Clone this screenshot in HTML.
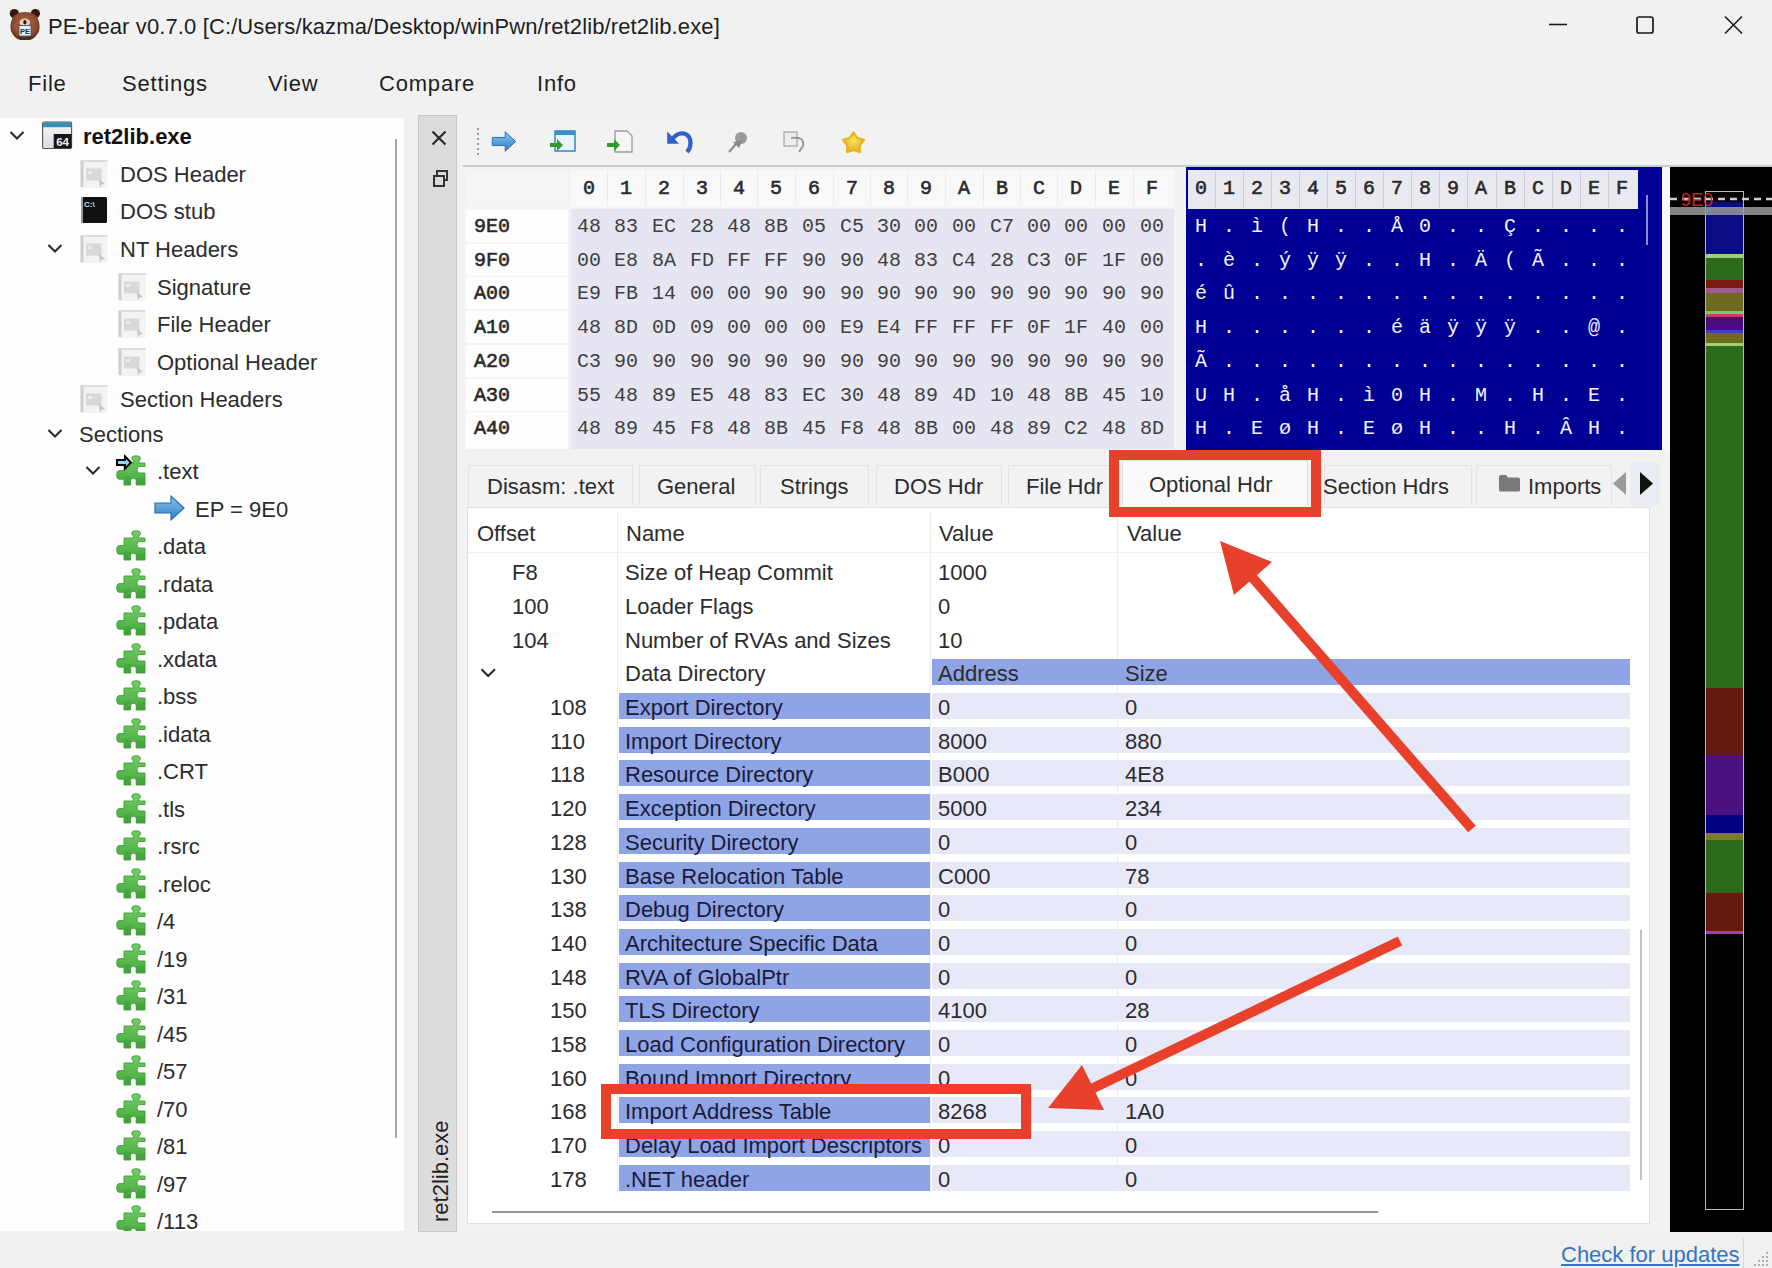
<!DOCTYPE html><html><head><meta charset="utf-8"><style>
html,body{margin:0;padding:0}
body{width:1772px;height:1268px;position:relative;overflow:hidden;background:#f0f0f0;font-family:'Liberation Sans',sans-serif}
.a{position:absolute}
svg{position:absolute;overflow:visible}
</style></head><body>
<div class="a" style="left:0px;top:0px;width:1772px;height:118px;background:#f1f1f1;"></div>
<svg style="left:5px;top:5px" width="40" height="40" viewBox="0 0 40 40">
<defs><radialGradient id="bh" cx="0.5" cy="0.45" r="0.6"><stop offset="0" stop-color="#b06a48"/><stop offset="0.7" stop-color="#8c4a30"/><stop offset="1" stop-color="#4a2418"/></radialGradient></defs>
<circle cx="9.3" cy="8.6" r="4.6" fill="#2e1810"/><circle cx="30.4" cy="8.6" r="4.6" fill="#2e1810"/>
<path d="M7 14 Q9 7 20 7 Q31 7 33 14 Q35.5 20 34 26 Q31 33 25 35 L15 35 Q9 33 6 26 Q4.5 20 7 14Z" fill="url(#bh)"/>
<ellipse cx="19.8" cy="17.5" rx="5.2" ry="4" fill="#e6d2c4"/>
<ellipse cx="19.9" cy="17.3" rx="1.6" ry="2.2" fill="#2a1a14"/>
<rect x="14" y="20.5" width="12" height="10.5" fill="#e9eef1" stroke="#3c4a5a" stroke-width="0.8"/>
<text x="20" y="29" font-size="7.5" font-family="Liberation Sans" font-weight="bold" fill="#203040" text-anchor="middle">PE</text>
<path d="M14 32 Q20 35.5 26 32" fill="none" stroke="#3a2a24" stroke-width="2"/>
</svg>
<div class="a" style="left:48px;top:16px;font:22px/22px 'Liberation Sans', sans-serif;color:#1e1e1e;white-space:pre;letter-spacing:0.12px">PE-bear v0.7.0 [C:/Users/kazma/Desktop/winPwn/ret2lib/ret2lib.exe]</div>
<svg style="left:1548px;top:16px" width="20" height="18"><line x1="1" y1="8.5" x2="19" y2="8.5" stroke="#1a1a1a" stroke-width="1.6"/></svg>
<svg style="left:1636px;top:16px" width="18" height="18"><rect x="1" y="1" width="16" height="16" rx="2" fill="none" stroke="#1a1a1a" stroke-width="1.7"/></svg>
<svg style="left:1724px;top:16px" width="19" height="18"><path d="M1 0.5 L18 17.5 M18 0.5 L1 17.5" stroke="#1a1a1a" stroke-width="1.6"/></svg>
<div class="a" style="left:28px;top:73px;font:22px/22px 'Liberation Sans', sans-serif;color:#1e1e1e;white-space:pre;letter-spacing:0.8px">File</div>
<div class="a" style="left:122px;top:73px;font:22px/22px 'Liberation Sans', sans-serif;color:#1e1e1e;white-space:pre;letter-spacing:0.8px">Settings</div>
<div class="a" style="left:268px;top:73px;font:22px/22px 'Liberation Sans', sans-serif;color:#1e1e1e;white-space:pre;letter-spacing:0.8px">View</div>
<div class="a" style="left:379px;top:73px;font:22px/22px 'Liberation Sans', sans-serif;color:#1e1e1e;white-space:pre;letter-spacing:0.8px">Compare</div>
<div class="a" style="left:537px;top:73px;font:22px/22px 'Liberation Sans', sans-serif;color:#1e1e1e;white-space:pre;letter-spacing:0.8px">Info</div>
<div class="a" style="left:0px;top:118px;width:404px;height:1113px;background:#fefefe;"></div>
<div class="a" style="left:395px;top:139px;width:2px;height:999px;background:#a8a8a8;"></div>
<svg style="left:9px;top:130px" width="16" height="11"><path d="M1.5 2 L8 8.6 L14.5 2" fill="none" stroke="#2a2a2a" stroke-width="2.1"/></svg>
<svg style="left:42px;top:121px" width="31" height="28" viewBox="0 0 31 28">
<defs><linearGradient id="eg" x1="0" y1="0" x2="0" y2="1"><stop offset="0" stop-color="#f4f6f8"/><stop offset="1" stop-color="#dcdcdc"/></linearGradient></defs>
<rect x="0.6" y="1" width="29" height="26.5" rx="1.5" fill="url(#eg)" stroke="#555" stroke-width="1.1"/>
<rect x="1" y="1.2" width="28.4" height="5" fill="#3a8db4"/>
<rect x="11.7" y="13" width="17.8" height="14.3" fill="#161616"/>
<text x="20.6" y="25" font-size="11.5" font-family="Liberation Sans" font-weight="bold" fill="#f0f0f0" text-anchor="middle">64</text></svg>
<div class="a" style="left:83px;top:126px;font:22px/22px 'Liberation Sans', sans-serif;color:#111;white-space:pre;font-weight:bold">ret2lib.exe</div>
<svg style="left:80px;top:159px" width="28" height="28" viewBox="0 0 28 28">
<rect x="0.5" y="1" width="27" height="28" fill="#f3f3f3"/>
<rect x="0.5" y="1" width="27" height="2" fill="#dcdcdc"/>
<rect x="0.5" y="2" width="3" height="26" fill="#cfcfcf"/>
<rect x="6" y="9.5" width="15.5" height="12" fill="#d8d8d6"/>
<rect x="8" y="12" width="4" height="3" fill="#ececec"/>
<path d="M19 20 L25 25 L21.5 25.5 L20 29Z" fill="#c4c4c4"/></svg>
<div class="a" style="left:120px;top:164px;font:22px/22px 'Liberation Sans', sans-serif;color:#2c2c2c;white-space:pre;">DOS Header</div>
<svg style="left:80px;top:196px" width="28" height="28" viewBox="0 0 28 28">
<rect x="2" y="1" width="25" height="26" rx="1.5" fill="#111"/>
<rect x="1" y="1" width="2" height="26" fill="#999"/>
<text x="4" y="11" font-size="8" font-family="Liberation Sans" font-weight="bold" fill="#ddd">C:\</text></svg>
<div class="a" style="left:120px;top:201px;font:22px/22px 'Liberation Sans', sans-serif;color:#2c2c2c;white-space:pre;">DOS stub</div>
<svg style="left:47px;top:243px" width="16" height="11"><path d="M1.5 2 L8 8.6 L14.5 2" fill="none" stroke="#2a2a2a" stroke-width="2.1"/></svg>
<svg style="left:80px;top:234px" width="28" height="28" viewBox="0 0 28 28">
<rect x="0.5" y="1" width="27" height="28" fill="#f3f3f3"/>
<rect x="0.5" y="1" width="27" height="2" fill="#dcdcdc"/>
<rect x="0.5" y="2" width="3" height="26" fill="#cfcfcf"/>
<rect x="6" y="9.5" width="15.5" height="12" fill="#d8d8d6"/>
<rect x="8" y="12" width="4" height="3" fill="#ececec"/>
<path d="M19 20 L25 25 L21.5 25.5 L20 29Z" fill="#c4c4c4"/></svg>
<div class="a" style="left:120px;top:239px;font:22px/22px 'Liberation Sans', sans-serif;color:#2c2c2c;white-space:pre;">NT Headers</div>
<svg style="left:118px;top:272px" width="28" height="28" viewBox="0 0 28 28">
<rect x="0.5" y="1" width="27" height="28" fill="#f3f3f3"/>
<rect x="0.5" y="1" width="27" height="2" fill="#dcdcdc"/>
<rect x="0.5" y="2" width="3" height="26" fill="#cfcfcf"/>
<rect x="6" y="9.5" width="15.5" height="12" fill="#d8d8d6"/>
<rect x="8" y="12" width="4" height="3" fill="#ececec"/>
<path d="M19 20 L25 25 L21.5 25.5 L20 29Z" fill="#c4c4c4"/></svg>
<div class="a" style="left:157px;top:277px;font:22px/22px 'Liberation Sans', sans-serif;color:#2c2c2c;white-space:pre;">Signature</div>
<svg style="left:118px;top:309px" width="28" height="28" viewBox="0 0 28 28">
<rect x="0.5" y="1" width="27" height="28" fill="#f3f3f3"/>
<rect x="0.5" y="1" width="27" height="2" fill="#dcdcdc"/>
<rect x="0.5" y="2" width="3" height="26" fill="#cfcfcf"/>
<rect x="6" y="9.5" width="15.5" height="12" fill="#d8d8d6"/>
<rect x="8" y="12" width="4" height="3" fill="#ececec"/>
<path d="M19 20 L25 25 L21.5 25.5 L20 29Z" fill="#c4c4c4"/></svg>
<div class="a" style="left:157px;top:314px;font:22px/22px 'Liberation Sans', sans-serif;color:#2c2c2c;white-space:pre;">File Header</div>
<svg style="left:118px;top:347px" width="28" height="28" viewBox="0 0 28 28">
<rect x="0.5" y="1" width="27" height="28" fill="#f3f3f3"/>
<rect x="0.5" y="1" width="27" height="2" fill="#dcdcdc"/>
<rect x="0.5" y="2" width="3" height="26" fill="#cfcfcf"/>
<rect x="6" y="9.5" width="15.5" height="12" fill="#d8d8d6"/>
<rect x="8" y="12" width="4" height="3" fill="#ececec"/>
<path d="M19 20 L25 25 L21.5 25.5 L20 29Z" fill="#c4c4c4"/></svg>
<div class="a" style="left:157px;top:352px;font:22px/22px 'Liberation Sans', sans-serif;color:#2c2c2c;white-space:pre;">Optional Header</div>
<svg style="left:80px;top:384px" width="28" height="28" viewBox="0 0 28 28">
<rect x="0.5" y="1" width="27" height="28" fill="#f3f3f3"/>
<rect x="0.5" y="1" width="27" height="2" fill="#dcdcdc"/>
<rect x="0.5" y="2" width="3" height="26" fill="#cfcfcf"/>
<rect x="6" y="9.5" width="15.5" height="12" fill="#d8d8d6"/>
<rect x="8" y="12" width="4" height="3" fill="#ececec"/>
<path d="M19 20 L25 25 L21.5 25.5 L20 29Z" fill="#c4c4c4"/></svg>
<div class="a" style="left:120px;top:389px;font:22px/22px 'Liberation Sans', sans-serif;color:#2c2c2c;white-space:pre;">Section Headers</div>
<svg style="left:47px;top:428px" width="16" height="11"><path d="M1.5 2 L8 8.6 L14.5 2" fill="none" stroke="#2a2a2a" stroke-width="2.1"/></svg>
<div class="a" style="left:79px;top:424px;font:22px/22px 'Liberation Sans', sans-serif;color:#2c2c2c;white-space:pre;">Sections</div>
<svg style="left:85px;top:465px" width="16" height="11"><path d="M1.5 2 L8 8.6 L14.5 2" fill="none" stroke="#2a2a2a" stroke-width="2.1"/></svg>
<svg style="left:116px;top:455px" width="30" height="31" viewBox="0 0 30 31">
<defs><linearGradient id="pg" x1="0" y1="0" x2="0" y2="1"><stop offset="0" stop-color="#72cf66"/><stop offset="1" stop-color="#45a83c"/></linearGradient></defs>
<path d="M8 8 L17.5 8 L17.5 5.8 Q15.8 5.5 15.8 3.2 Q15.8 0.8 20.1 0.8 Q24.4 0.8 24.4 3.2 Q24.4 5.5 22.8 5.8 L22.8 8 L29 8 L29 11.5 L23.5 11.5 Q21 11.5 21 14.8 Q21 18 23.5 18 L29 18 L29 30 L20.2 30 L20.2 25.5 Q20.2 23.2 17.4 23.2 Q14.6 23.2 14.6 25.5 L14.6 30 L8 30 L8 24.2 L3.2 24.2 Q0.8 24.2 0.8 20 Q0.8 15.6 3.2 15.6 L8 15.6 Z" fill="url(#pg)" stroke="#3f9a37" stroke-width="0.9"/>
<path d="M8 21 L14.6 21 L14.6 30 L8 30Z M20.2 23 L29 23 L29 30 L20.2 30Z" fill="#3d9435" opacity=".35"/><path d="M1 5 L9 5 L9 1.5 L15 7.5 L9 13.5 L9 10 L1 10 Z" fill="#9ad4f4" stroke="#050505" stroke-width="2"/></svg>
<div class="a" style="left:157px;top:461px;font:22px/22px 'Liberation Sans', sans-serif;color:#2c2c2c;white-space:pre;">.text</div>
<svg style="left:154px;top:495px" width="31" height="26" viewBox="0 0 31 26">
<defs><linearGradient id="ba" x1="0" y1="0" x2="0" y2="1"><stop offset="0" stop-color="#8cc4ee"/><stop offset="1" stop-color="#2f7fc4"/></linearGradient></defs>
<path d="M1 8 L17 8 L17 1 L30 13 L17 25 L17 18 L1 18 Z" fill="url(#ba)" stroke="#2a6cae" stroke-width="1.2"/></svg>
<div class="a" style="left:195px;top:499px;font:22px/22px 'Liberation Sans', sans-serif;color:#2c2c2c;white-space:pre;">EP = 9E0</div>
<svg style="left:116px;top:530px" width="30" height="31" viewBox="0 0 30 31">
<defs><linearGradient id="pg" x1="0" y1="0" x2="0" y2="1"><stop offset="0" stop-color="#72cf66"/><stop offset="1" stop-color="#45a83c"/></linearGradient></defs>
<path d="M8 8 L17.5 8 L17.5 5.8 Q15.8 5.5 15.8 3.2 Q15.8 0.8 20.1 0.8 Q24.4 0.8 24.4 3.2 Q24.4 5.5 22.8 5.8 L22.8 8 L29 8 L29 11.5 L23.5 11.5 Q21 11.5 21 14.8 Q21 18 23.5 18 L29 18 L29 30 L20.2 30 L20.2 25.5 Q20.2 23.2 17.4 23.2 Q14.6 23.2 14.6 25.5 L14.6 30 L8 30 L8 24.2 L3.2 24.2 Q0.8 24.2 0.8 20 Q0.8 15.6 3.2 15.6 L8 15.6 Z" fill="url(#pg)" stroke="#3f9a37" stroke-width="0.9"/>
<path d="M8 21 L14.6 21 L14.6 30 L8 30Z M20.2 23 L29 23 L29 30 L20.2 30Z" fill="#3d9435" opacity=".35"/></svg>
<div class="a" style="left:157px;top:536px;font:22px/22px 'Liberation Sans', sans-serif;color:#2c2c2c;white-space:pre;">.data</div>
<svg style="left:116px;top:568px" width="30" height="31" viewBox="0 0 30 31">
<defs><linearGradient id="pg" x1="0" y1="0" x2="0" y2="1"><stop offset="0" stop-color="#72cf66"/><stop offset="1" stop-color="#45a83c"/></linearGradient></defs>
<path d="M8 8 L17.5 8 L17.5 5.8 Q15.8 5.5 15.8 3.2 Q15.8 0.8 20.1 0.8 Q24.4 0.8 24.4 3.2 Q24.4 5.5 22.8 5.8 L22.8 8 L29 8 L29 11.5 L23.5 11.5 Q21 11.5 21 14.8 Q21 18 23.5 18 L29 18 L29 30 L20.2 30 L20.2 25.5 Q20.2 23.2 17.4 23.2 Q14.6 23.2 14.6 25.5 L14.6 30 L8 30 L8 24.2 L3.2 24.2 Q0.8 24.2 0.8 20 Q0.8 15.6 3.2 15.6 L8 15.6 Z" fill="url(#pg)" stroke="#3f9a37" stroke-width="0.9"/>
<path d="M8 21 L14.6 21 L14.6 30 L8 30Z M20.2 23 L29 23 L29 30 L20.2 30Z" fill="#3d9435" opacity=".35"/></svg>
<div class="a" style="left:157px;top:574px;font:22px/22px 'Liberation Sans', sans-serif;color:#2c2c2c;white-space:pre;">.rdata</div>
<svg style="left:116px;top:605px" width="30" height="31" viewBox="0 0 30 31">
<defs><linearGradient id="pg" x1="0" y1="0" x2="0" y2="1"><stop offset="0" stop-color="#72cf66"/><stop offset="1" stop-color="#45a83c"/></linearGradient></defs>
<path d="M8 8 L17.5 8 L17.5 5.8 Q15.8 5.5 15.8 3.2 Q15.8 0.8 20.1 0.8 Q24.4 0.8 24.4 3.2 Q24.4 5.5 22.8 5.8 L22.8 8 L29 8 L29 11.5 L23.5 11.5 Q21 11.5 21 14.8 Q21 18 23.5 18 L29 18 L29 30 L20.2 30 L20.2 25.5 Q20.2 23.2 17.4 23.2 Q14.6 23.2 14.6 25.5 L14.6 30 L8 30 L8 24.2 L3.2 24.2 Q0.8 24.2 0.8 20 Q0.8 15.6 3.2 15.6 L8 15.6 Z" fill="url(#pg)" stroke="#3f9a37" stroke-width="0.9"/>
<path d="M8 21 L14.6 21 L14.6 30 L8 30Z M20.2 23 L29 23 L29 30 L20.2 30Z" fill="#3d9435" opacity=".35"/></svg>
<div class="a" style="left:157px;top:611px;font:22px/22px 'Liberation Sans', sans-serif;color:#2c2c2c;white-space:pre;">.pdata</div>
<svg style="left:116px;top:643px" width="30" height="31" viewBox="0 0 30 31">
<defs><linearGradient id="pg" x1="0" y1="0" x2="0" y2="1"><stop offset="0" stop-color="#72cf66"/><stop offset="1" stop-color="#45a83c"/></linearGradient></defs>
<path d="M8 8 L17.5 8 L17.5 5.8 Q15.8 5.5 15.8 3.2 Q15.8 0.8 20.1 0.8 Q24.4 0.8 24.4 3.2 Q24.4 5.5 22.8 5.8 L22.8 8 L29 8 L29 11.5 L23.5 11.5 Q21 11.5 21 14.8 Q21 18 23.5 18 L29 18 L29 30 L20.2 30 L20.2 25.5 Q20.2 23.2 17.4 23.2 Q14.6 23.2 14.6 25.5 L14.6 30 L8 30 L8 24.2 L3.2 24.2 Q0.8 24.2 0.8 20 Q0.8 15.6 3.2 15.6 L8 15.6 Z" fill="url(#pg)" stroke="#3f9a37" stroke-width="0.9"/>
<path d="M8 21 L14.6 21 L14.6 30 L8 30Z M20.2 23 L29 23 L29 30 L20.2 30Z" fill="#3d9435" opacity=".35"/></svg>
<div class="a" style="left:157px;top:649px;font:22px/22px 'Liberation Sans', sans-serif;color:#2c2c2c;white-space:pre;">.xdata</div>
<svg style="left:116px;top:680px" width="30" height="31" viewBox="0 0 30 31">
<defs><linearGradient id="pg" x1="0" y1="0" x2="0" y2="1"><stop offset="0" stop-color="#72cf66"/><stop offset="1" stop-color="#45a83c"/></linearGradient></defs>
<path d="M8 8 L17.5 8 L17.5 5.8 Q15.8 5.5 15.8 3.2 Q15.8 0.8 20.1 0.8 Q24.4 0.8 24.4 3.2 Q24.4 5.5 22.8 5.8 L22.8 8 L29 8 L29 11.5 L23.5 11.5 Q21 11.5 21 14.8 Q21 18 23.5 18 L29 18 L29 30 L20.2 30 L20.2 25.5 Q20.2 23.2 17.4 23.2 Q14.6 23.2 14.6 25.5 L14.6 30 L8 30 L8 24.2 L3.2 24.2 Q0.8 24.2 0.8 20 Q0.8 15.6 3.2 15.6 L8 15.6 Z" fill="url(#pg)" stroke="#3f9a37" stroke-width="0.9"/>
<path d="M8 21 L14.6 21 L14.6 30 L8 30Z M20.2 23 L29 23 L29 30 L20.2 30Z" fill="#3d9435" opacity=".35"/></svg>
<div class="a" style="left:157px;top:686px;font:22px/22px 'Liberation Sans', sans-serif;color:#2c2c2c;white-space:pre;">.bss</div>
<svg style="left:116px;top:718px" width="30" height="31" viewBox="0 0 30 31">
<defs><linearGradient id="pg" x1="0" y1="0" x2="0" y2="1"><stop offset="0" stop-color="#72cf66"/><stop offset="1" stop-color="#45a83c"/></linearGradient></defs>
<path d="M8 8 L17.5 8 L17.5 5.8 Q15.8 5.5 15.8 3.2 Q15.8 0.8 20.1 0.8 Q24.4 0.8 24.4 3.2 Q24.4 5.5 22.8 5.8 L22.8 8 L29 8 L29 11.5 L23.5 11.5 Q21 11.5 21 14.8 Q21 18 23.5 18 L29 18 L29 30 L20.2 30 L20.2 25.5 Q20.2 23.2 17.4 23.2 Q14.6 23.2 14.6 25.5 L14.6 30 L8 30 L8 24.2 L3.2 24.2 Q0.8 24.2 0.8 20 Q0.8 15.6 3.2 15.6 L8 15.6 Z" fill="url(#pg)" stroke="#3f9a37" stroke-width="0.9"/>
<path d="M8 21 L14.6 21 L14.6 30 L8 30Z M20.2 23 L29 23 L29 30 L20.2 30Z" fill="#3d9435" opacity=".35"/></svg>
<div class="a" style="left:157px;top:724px;font:22px/22px 'Liberation Sans', sans-serif;color:#2c2c2c;white-space:pre;">.idata</div>
<svg style="left:116px;top:755px" width="30" height="31" viewBox="0 0 30 31">
<defs><linearGradient id="pg" x1="0" y1="0" x2="0" y2="1"><stop offset="0" stop-color="#72cf66"/><stop offset="1" stop-color="#45a83c"/></linearGradient></defs>
<path d="M8 8 L17.5 8 L17.5 5.8 Q15.8 5.5 15.8 3.2 Q15.8 0.8 20.1 0.8 Q24.4 0.8 24.4 3.2 Q24.4 5.5 22.8 5.8 L22.8 8 L29 8 L29 11.5 L23.5 11.5 Q21 11.5 21 14.8 Q21 18 23.5 18 L29 18 L29 30 L20.2 30 L20.2 25.5 Q20.2 23.2 17.4 23.2 Q14.6 23.2 14.6 25.5 L14.6 30 L8 30 L8 24.2 L3.2 24.2 Q0.8 24.2 0.8 20 Q0.8 15.6 3.2 15.6 L8 15.6 Z" fill="url(#pg)" stroke="#3f9a37" stroke-width="0.9"/>
<path d="M8 21 L14.6 21 L14.6 30 L8 30Z M20.2 23 L29 23 L29 30 L20.2 30Z" fill="#3d9435" opacity=".35"/></svg>
<div class="a" style="left:157px;top:761px;font:22px/22px 'Liberation Sans', sans-serif;color:#2c2c2c;white-space:pre;">.CRT</div>
<svg style="left:116px;top:793px" width="30" height="31" viewBox="0 0 30 31">
<defs><linearGradient id="pg" x1="0" y1="0" x2="0" y2="1"><stop offset="0" stop-color="#72cf66"/><stop offset="1" stop-color="#45a83c"/></linearGradient></defs>
<path d="M8 8 L17.5 8 L17.5 5.8 Q15.8 5.5 15.8 3.2 Q15.8 0.8 20.1 0.8 Q24.4 0.8 24.4 3.2 Q24.4 5.5 22.8 5.8 L22.8 8 L29 8 L29 11.5 L23.5 11.5 Q21 11.5 21 14.8 Q21 18 23.5 18 L29 18 L29 30 L20.2 30 L20.2 25.5 Q20.2 23.2 17.4 23.2 Q14.6 23.2 14.6 25.5 L14.6 30 L8 30 L8 24.2 L3.2 24.2 Q0.8 24.2 0.8 20 Q0.8 15.6 3.2 15.6 L8 15.6 Z" fill="url(#pg)" stroke="#3f9a37" stroke-width="0.9"/>
<path d="M8 21 L14.6 21 L14.6 30 L8 30Z M20.2 23 L29 23 L29 30 L20.2 30Z" fill="#3d9435" opacity=".35"/></svg>
<div class="a" style="left:157px;top:799px;font:22px/22px 'Liberation Sans', sans-serif;color:#2c2c2c;white-space:pre;">.tls</div>
<svg style="left:116px;top:830px" width="30" height="31" viewBox="0 0 30 31">
<defs><linearGradient id="pg" x1="0" y1="0" x2="0" y2="1"><stop offset="0" stop-color="#72cf66"/><stop offset="1" stop-color="#45a83c"/></linearGradient></defs>
<path d="M8 8 L17.5 8 L17.5 5.8 Q15.8 5.5 15.8 3.2 Q15.8 0.8 20.1 0.8 Q24.4 0.8 24.4 3.2 Q24.4 5.5 22.8 5.8 L22.8 8 L29 8 L29 11.5 L23.5 11.5 Q21 11.5 21 14.8 Q21 18 23.5 18 L29 18 L29 30 L20.2 30 L20.2 25.5 Q20.2 23.2 17.4 23.2 Q14.6 23.2 14.6 25.5 L14.6 30 L8 30 L8 24.2 L3.2 24.2 Q0.8 24.2 0.8 20 Q0.8 15.6 3.2 15.6 L8 15.6 Z" fill="url(#pg)" stroke="#3f9a37" stroke-width="0.9"/>
<path d="M8 21 L14.6 21 L14.6 30 L8 30Z M20.2 23 L29 23 L29 30 L20.2 30Z" fill="#3d9435" opacity=".35"/></svg>
<div class="a" style="left:157px;top:836px;font:22px/22px 'Liberation Sans', sans-serif;color:#2c2c2c;white-space:pre;">.rsrc</div>
<svg style="left:116px;top:868px" width="30" height="31" viewBox="0 0 30 31">
<defs><linearGradient id="pg" x1="0" y1="0" x2="0" y2="1"><stop offset="0" stop-color="#72cf66"/><stop offset="1" stop-color="#45a83c"/></linearGradient></defs>
<path d="M8 8 L17.5 8 L17.5 5.8 Q15.8 5.5 15.8 3.2 Q15.8 0.8 20.1 0.8 Q24.4 0.8 24.4 3.2 Q24.4 5.5 22.8 5.8 L22.8 8 L29 8 L29 11.5 L23.5 11.5 Q21 11.5 21 14.8 Q21 18 23.5 18 L29 18 L29 30 L20.2 30 L20.2 25.5 Q20.2 23.2 17.4 23.2 Q14.6 23.2 14.6 25.5 L14.6 30 L8 30 L8 24.2 L3.2 24.2 Q0.8 24.2 0.8 20 Q0.8 15.6 3.2 15.6 L8 15.6 Z" fill="url(#pg)" stroke="#3f9a37" stroke-width="0.9"/>
<path d="M8 21 L14.6 21 L14.6 30 L8 30Z M20.2 23 L29 23 L29 30 L20.2 30Z" fill="#3d9435" opacity=".35"/></svg>
<div class="a" style="left:157px;top:874px;font:22px/22px 'Liberation Sans', sans-serif;color:#2c2c2c;white-space:pre;">.reloc</div>
<svg style="left:116px;top:905px" width="30" height="31" viewBox="0 0 30 31">
<defs><linearGradient id="pg" x1="0" y1="0" x2="0" y2="1"><stop offset="0" stop-color="#72cf66"/><stop offset="1" stop-color="#45a83c"/></linearGradient></defs>
<path d="M8 8 L17.5 8 L17.5 5.8 Q15.8 5.5 15.8 3.2 Q15.8 0.8 20.1 0.8 Q24.4 0.8 24.4 3.2 Q24.4 5.5 22.8 5.8 L22.8 8 L29 8 L29 11.5 L23.5 11.5 Q21 11.5 21 14.8 Q21 18 23.5 18 L29 18 L29 30 L20.2 30 L20.2 25.5 Q20.2 23.2 17.4 23.2 Q14.6 23.2 14.6 25.5 L14.6 30 L8 30 L8 24.2 L3.2 24.2 Q0.8 24.2 0.8 20 Q0.8 15.6 3.2 15.6 L8 15.6 Z" fill="url(#pg)" stroke="#3f9a37" stroke-width="0.9"/>
<path d="M8 21 L14.6 21 L14.6 30 L8 30Z M20.2 23 L29 23 L29 30 L20.2 30Z" fill="#3d9435" opacity=".35"/></svg>
<div class="a" style="left:157px;top:911px;font:22px/22px 'Liberation Sans', sans-serif;color:#2c2c2c;white-space:pre;">/4</div>
<svg style="left:116px;top:943px" width="30" height="31" viewBox="0 0 30 31">
<defs><linearGradient id="pg" x1="0" y1="0" x2="0" y2="1"><stop offset="0" stop-color="#72cf66"/><stop offset="1" stop-color="#45a83c"/></linearGradient></defs>
<path d="M8 8 L17.5 8 L17.5 5.8 Q15.8 5.5 15.8 3.2 Q15.8 0.8 20.1 0.8 Q24.4 0.8 24.4 3.2 Q24.4 5.5 22.8 5.8 L22.8 8 L29 8 L29 11.5 L23.5 11.5 Q21 11.5 21 14.8 Q21 18 23.5 18 L29 18 L29 30 L20.2 30 L20.2 25.5 Q20.2 23.2 17.4 23.2 Q14.6 23.2 14.6 25.5 L14.6 30 L8 30 L8 24.2 L3.2 24.2 Q0.8 24.2 0.8 20 Q0.8 15.6 3.2 15.6 L8 15.6 Z" fill="url(#pg)" stroke="#3f9a37" stroke-width="0.9"/>
<path d="M8 21 L14.6 21 L14.6 30 L8 30Z M20.2 23 L29 23 L29 30 L20.2 30Z" fill="#3d9435" opacity=".35"/></svg>
<div class="a" style="left:157px;top:949px;font:22px/22px 'Liberation Sans', sans-serif;color:#2c2c2c;white-space:pre;">/19</div>
<svg style="left:116px;top:980px" width="30" height="31" viewBox="0 0 30 31">
<defs><linearGradient id="pg" x1="0" y1="0" x2="0" y2="1"><stop offset="0" stop-color="#72cf66"/><stop offset="1" stop-color="#45a83c"/></linearGradient></defs>
<path d="M8 8 L17.5 8 L17.5 5.8 Q15.8 5.5 15.8 3.2 Q15.8 0.8 20.1 0.8 Q24.4 0.8 24.4 3.2 Q24.4 5.5 22.8 5.8 L22.8 8 L29 8 L29 11.5 L23.5 11.5 Q21 11.5 21 14.8 Q21 18 23.5 18 L29 18 L29 30 L20.2 30 L20.2 25.5 Q20.2 23.2 17.4 23.2 Q14.6 23.2 14.6 25.5 L14.6 30 L8 30 L8 24.2 L3.2 24.2 Q0.8 24.2 0.8 20 Q0.8 15.6 3.2 15.6 L8 15.6 Z" fill="url(#pg)" stroke="#3f9a37" stroke-width="0.9"/>
<path d="M8 21 L14.6 21 L14.6 30 L8 30Z M20.2 23 L29 23 L29 30 L20.2 30Z" fill="#3d9435" opacity=".35"/></svg>
<div class="a" style="left:157px;top:986px;font:22px/22px 'Liberation Sans', sans-serif;color:#2c2c2c;white-space:pre;">/31</div>
<svg style="left:116px;top:1018px" width="30" height="31" viewBox="0 0 30 31">
<defs><linearGradient id="pg" x1="0" y1="0" x2="0" y2="1"><stop offset="0" stop-color="#72cf66"/><stop offset="1" stop-color="#45a83c"/></linearGradient></defs>
<path d="M8 8 L17.5 8 L17.5 5.8 Q15.8 5.5 15.8 3.2 Q15.8 0.8 20.1 0.8 Q24.4 0.8 24.4 3.2 Q24.4 5.5 22.8 5.8 L22.8 8 L29 8 L29 11.5 L23.5 11.5 Q21 11.5 21 14.8 Q21 18 23.5 18 L29 18 L29 30 L20.2 30 L20.2 25.5 Q20.2 23.2 17.4 23.2 Q14.6 23.2 14.6 25.5 L14.6 30 L8 30 L8 24.2 L3.2 24.2 Q0.8 24.2 0.8 20 Q0.8 15.6 3.2 15.6 L8 15.6 Z" fill="url(#pg)" stroke="#3f9a37" stroke-width="0.9"/>
<path d="M8 21 L14.6 21 L14.6 30 L8 30Z M20.2 23 L29 23 L29 30 L20.2 30Z" fill="#3d9435" opacity=".35"/></svg>
<div class="a" style="left:157px;top:1024px;font:22px/22px 'Liberation Sans', sans-serif;color:#2c2c2c;white-space:pre;">/45</div>
<svg style="left:116px;top:1055px" width="30" height="31" viewBox="0 0 30 31">
<defs><linearGradient id="pg" x1="0" y1="0" x2="0" y2="1"><stop offset="0" stop-color="#72cf66"/><stop offset="1" stop-color="#45a83c"/></linearGradient></defs>
<path d="M8 8 L17.5 8 L17.5 5.8 Q15.8 5.5 15.8 3.2 Q15.8 0.8 20.1 0.8 Q24.4 0.8 24.4 3.2 Q24.4 5.5 22.8 5.8 L22.8 8 L29 8 L29 11.5 L23.5 11.5 Q21 11.5 21 14.8 Q21 18 23.5 18 L29 18 L29 30 L20.2 30 L20.2 25.5 Q20.2 23.2 17.4 23.2 Q14.6 23.2 14.6 25.5 L14.6 30 L8 30 L8 24.2 L3.2 24.2 Q0.8 24.2 0.8 20 Q0.8 15.6 3.2 15.6 L8 15.6 Z" fill="url(#pg)" stroke="#3f9a37" stroke-width="0.9"/>
<path d="M8 21 L14.6 21 L14.6 30 L8 30Z M20.2 23 L29 23 L29 30 L20.2 30Z" fill="#3d9435" opacity=".35"/></svg>
<div class="a" style="left:157px;top:1061px;font:22px/22px 'Liberation Sans', sans-serif;color:#2c2c2c;white-space:pre;">/57</div>
<svg style="left:116px;top:1093px" width="30" height="31" viewBox="0 0 30 31">
<defs><linearGradient id="pg" x1="0" y1="0" x2="0" y2="1"><stop offset="0" stop-color="#72cf66"/><stop offset="1" stop-color="#45a83c"/></linearGradient></defs>
<path d="M8 8 L17.5 8 L17.5 5.8 Q15.8 5.5 15.8 3.2 Q15.8 0.8 20.1 0.8 Q24.4 0.8 24.4 3.2 Q24.4 5.5 22.8 5.8 L22.8 8 L29 8 L29 11.5 L23.5 11.5 Q21 11.5 21 14.8 Q21 18 23.5 18 L29 18 L29 30 L20.2 30 L20.2 25.5 Q20.2 23.2 17.4 23.2 Q14.6 23.2 14.6 25.5 L14.6 30 L8 30 L8 24.2 L3.2 24.2 Q0.8 24.2 0.8 20 Q0.8 15.6 3.2 15.6 L8 15.6 Z" fill="url(#pg)" stroke="#3f9a37" stroke-width="0.9"/>
<path d="M8 21 L14.6 21 L14.6 30 L8 30Z M20.2 23 L29 23 L29 30 L20.2 30Z" fill="#3d9435" opacity=".35"/></svg>
<div class="a" style="left:157px;top:1099px;font:22px/22px 'Liberation Sans', sans-serif;color:#2c2c2c;white-space:pre;">/70</div>
<svg style="left:116px;top:1130px" width="30" height="31" viewBox="0 0 30 31">
<defs><linearGradient id="pg" x1="0" y1="0" x2="0" y2="1"><stop offset="0" stop-color="#72cf66"/><stop offset="1" stop-color="#45a83c"/></linearGradient></defs>
<path d="M8 8 L17.5 8 L17.5 5.8 Q15.8 5.5 15.8 3.2 Q15.8 0.8 20.1 0.8 Q24.4 0.8 24.4 3.2 Q24.4 5.5 22.8 5.8 L22.8 8 L29 8 L29 11.5 L23.5 11.5 Q21 11.5 21 14.8 Q21 18 23.5 18 L29 18 L29 30 L20.2 30 L20.2 25.5 Q20.2 23.2 17.4 23.2 Q14.6 23.2 14.6 25.5 L14.6 30 L8 30 L8 24.2 L3.2 24.2 Q0.8 24.2 0.8 20 Q0.8 15.6 3.2 15.6 L8 15.6 Z" fill="url(#pg)" stroke="#3f9a37" stroke-width="0.9"/>
<path d="M8 21 L14.6 21 L14.6 30 L8 30Z M20.2 23 L29 23 L29 30 L20.2 30Z" fill="#3d9435" opacity=".35"/></svg>
<div class="a" style="left:157px;top:1136px;font:22px/22px 'Liberation Sans', sans-serif;color:#2c2c2c;white-space:pre;">/81</div>
<svg style="left:116px;top:1168px" width="30" height="31" viewBox="0 0 30 31">
<defs><linearGradient id="pg" x1="0" y1="0" x2="0" y2="1"><stop offset="0" stop-color="#72cf66"/><stop offset="1" stop-color="#45a83c"/></linearGradient></defs>
<path d="M8 8 L17.5 8 L17.5 5.8 Q15.8 5.5 15.8 3.2 Q15.8 0.8 20.1 0.8 Q24.4 0.8 24.4 3.2 Q24.4 5.5 22.8 5.8 L22.8 8 L29 8 L29 11.5 L23.5 11.5 Q21 11.5 21 14.8 Q21 18 23.5 18 L29 18 L29 30 L20.2 30 L20.2 25.5 Q20.2 23.2 17.4 23.2 Q14.6 23.2 14.6 25.5 L14.6 30 L8 30 L8 24.2 L3.2 24.2 Q0.8 24.2 0.8 20 Q0.8 15.6 3.2 15.6 L8 15.6 Z" fill="url(#pg)" stroke="#3f9a37" stroke-width="0.9"/>
<path d="M8 21 L14.6 21 L14.6 30 L8 30Z M20.2 23 L29 23 L29 30 L20.2 30Z" fill="#3d9435" opacity=".35"/></svg>
<div class="a" style="left:157px;top:1174px;font:22px/22px 'Liberation Sans', sans-serif;color:#2c2c2c;white-space:pre;">/97</div>
<svg style="left:116px;top:1205px" width="30" height="31" viewBox="0 0 30 31">
<defs><linearGradient id="pg" x1="0" y1="0" x2="0" y2="1"><stop offset="0" stop-color="#72cf66"/><stop offset="1" stop-color="#45a83c"/></linearGradient></defs>
<path d="M8 8 L17.5 8 L17.5 5.8 Q15.8 5.5 15.8 3.2 Q15.8 0.8 20.1 0.8 Q24.4 0.8 24.4 3.2 Q24.4 5.5 22.8 5.8 L22.8 8 L29 8 L29 11.5 L23.5 11.5 Q21 11.5 21 14.8 Q21 18 23.5 18 L29 18 L29 30 L20.2 30 L20.2 25.5 Q20.2 23.2 17.4 23.2 Q14.6 23.2 14.6 25.5 L14.6 30 L8 30 L8 24.2 L3.2 24.2 Q0.8 24.2 0.8 20 Q0.8 15.6 3.2 15.6 L8 15.6 Z" fill="url(#pg)" stroke="#3f9a37" stroke-width="0.9"/>
<path d="M8 21 L14.6 21 L14.6 30 L8 30Z M20.2 23 L29 23 L29 30 L20.2 30Z" fill="#3d9435" opacity=".35"/></svg>
<div class="a" style="left:157px;top:1211px;font:22px/22px 'Liberation Sans', sans-serif;color:#2c2c2c;white-space:pre;">/113</div>
<div class="a" style="left:0px;top:1231px;width:418px;height:37px;background:#f0f0f0;"></div>
<div class="a" style="left:418px;top:115px;width:39px;height:1117px;background:#dcdcdc;box-sizing:border-box;border:1px solid #c6c6c6"></div>
<svg style="left:431px;top:130px" width="16" height="16"><path d="M1.5 1.5 L14.5 14.5 M14.5 1.5 L1.5 14.5" stroke="#2a2a2a" stroke-width="2.2"/></svg>
<svg style="left:433px;top:170px" width="16" height="18"><rect x="4" y="1" width="10" height="9" fill="none" stroke="#333" stroke-width="2"/><rect x="1" y="6" width="10" height="10" fill="#dcdcdc" stroke="#333" stroke-width="2"/></svg>
<div class="a" style="left:429px;top:1222px;width:110px;height:24px;transform-origin:0 0;transform:rotate(-90deg);font:22px/24px 'Liberation Sans';color:#222;text-align:left;white-space:pre">ret2lib.exe</div>
<div class="a" style="left:458px;top:116px;width:1314px;height:1116px;background:#f2f2f2;"></div>
<svg style="left:476px;top:127px" width="4" height="30"><rect x="1" y="1" width="2" height="2" fill="#9a9a9a"/><rect x="1" y="6" width="2" height="2" fill="#9a9a9a"/><rect x="1" y="11" width="2" height="2" fill="#9a9a9a"/><rect x="1" y="16" width="2" height="2" fill="#9a9a9a"/><rect x="1" y="21" width="2" height="2" fill="#9a9a9a"/><rect x="1" y="26" width="2" height="2" fill="#9a9a9a"/></svg>
<svg style="left:491px;top:131px" width="26" height="21" viewBox="0 0 31 26">
<defs><linearGradient id="ba" x1="0" y1="0" x2="0" y2="1"><stop offset="0" stop-color="#8cc4ee"/><stop offset="1" stop-color="#2f7fc4"/></linearGradient></defs>
<path d="M1 8 L17 8 L17 1 L30 13 L17 25 L17 18 L1 18 Z" fill="url(#ba)" stroke="#2a6cae" stroke-width="1.2"/></svg>
<svg style="left:550px;top:130px" width="26" height="23" viewBox="0 0 26 23">
<rect x="5" y="1" width="20" height="20" fill="#eaf4fb" stroke="#3b8fc8" stroke-width="1.6"/><rect x="5" y="1" width="20" height="4" fill="#3b8fc8"/>
<path d="M0 13 L7 13 L7 9 L13 15 L7 21 L7 17 L0 17Z" fill="#2e9a2e"/></svg>
<svg style="left:607px;top:130px" width="26" height="23" viewBox="0 0 26 23">
<path d="M8 1 L20 1 L25 6 L25 22 L8 22Z" fill="#f6f6f6" stroke="#9a9a9a" stroke-width="1.3"/>
<path d="M0 13 L7 13 L7 9 L13 15 L7 21 L7 17 L0 17Z" fill="#2e9a2e"/></svg>
<svg style="left:666px;top:130px" width="27" height="24" viewBox="0 0 27 24">
<path d="M6 9.5 Q11 2.5 18 3.5 Q24.5 5 24.5 13 Q24.5 18.5 21 22" fill="none" stroke="#2f62cc" stroke-width="4.2"/>
<path d="M1.2 1.5 L1.2 13.8 L13 13.8Z" fill="#2f62cc"/></svg>
<svg style="left:727px;top:130px" width="22" height="24" viewBox="0 0 22 24">
<path d="M2 22 L9 14" stroke="#8a8a8a" stroke-width="2"/><circle cx="14" cy="8" r="6" fill="#9a9a9a"/><path d="M6 12 L12 18 L16 10Z" fill="#8a8a8a"/></svg>
<svg style="left:783px;top:130px" width="26" height="24" viewBox="0 0 26 24">
<rect x="1" y="2" width="13" height="14" fill="#eee" stroke="#aaa" stroke-width="1.3"/><path d="M8 8 Q22 6 20 16 L16 22" fill="none" stroke="#999" stroke-width="2"/></svg>
<svg style="left:841px;top:130px" width="25" height="24" viewBox="0 0 25 24">
<defs><radialGradient id="sg" cx="0.5" cy="0.4" r="0.6"><stop offset="0" stop-color="#f8e45a"/><stop offset="1" stop-color="#e8b020"/></radialGradient></defs>
<path d="M12.5 2.3 L16.4 8.0 L23.0 9.9 L18.8 15.3 L19.0 22.2 L12.5 19.9 L6.0 22.2 L6.2 15.3 L2.0 9.9 L8.6 8.0Z" fill="url(#sg)" stroke="#e6b422" stroke-width="2.2" stroke-linejoin="round"/></svg>
<div class="a" style="left:463px;top:165px;width:1309px;height:2px;background:#cbcbcb;"></div>
<div class="a" style="left:464px;top:167px;width:712px;height:285px;background:#f3f3f3;"></div>
<div class="a" style="left:466px;top:170px;width:102px;height:37px;background:#f6f6f6;"></div>
<div class="a" style="left:571px;top:170px;width:603px;height:37px;background:#f9f9f9;"></div>
<div class="a" style="left:583px;top:179px;font:20px/20px 'Liberation Mono', monospace;color:#2a2a2a;white-space:pre;-webkit-text-stroke:0.6px #2a2a2a">0</div>
<div class="a" style="left:607px;top:171px;width:1px;height:35px;background:#ececec;"></div>
<div class="a" style="left:620px;top:179px;font:20px/20px 'Liberation Mono', monospace;color:#2a2a2a;white-space:pre;-webkit-text-stroke:0.6px #2a2a2a">1</div>
<div class="a" style="left:645px;top:171px;width:1px;height:35px;background:#ececec;"></div>
<div class="a" style="left:658px;top:179px;font:20px/20px 'Liberation Mono', monospace;color:#2a2a2a;white-space:pre;-webkit-text-stroke:0.6px #2a2a2a">2</div>
<div class="a" style="left:683px;top:171px;width:1px;height:35px;background:#ececec;"></div>
<div class="a" style="left:696px;top:179px;font:20px/20px 'Liberation Mono', monospace;color:#2a2a2a;white-space:pre;-webkit-text-stroke:0.6px #2a2a2a">3</div>
<div class="a" style="left:720px;top:171px;width:1px;height:35px;background:#ececec;"></div>
<div class="a" style="left:733px;top:179px;font:20px/20px 'Liberation Mono', monospace;color:#2a2a2a;white-space:pre;-webkit-text-stroke:0.6px #2a2a2a">4</div>
<div class="a" style="left:757px;top:171px;width:1px;height:35px;background:#ececec;"></div>
<div class="a" style="left:770px;top:179px;font:20px/20px 'Liberation Mono', monospace;color:#2a2a2a;white-space:pre;-webkit-text-stroke:0.6px #2a2a2a">5</div>
<div class="a" style="left:795px;top:171px;width:1px;height:35px;background:#ececec;"></div>
<div class="a" style="left:808px;top:179px;font:20px/20px 'Liberation Mono', monospace;color:#2a2a2a;white-space:pre;-webkit-text-stroke:0.6px #2a2a2a">6</div>
<div class="a" style="left:833px;top:171px;width:1px;height:35px;background:#ececec;"></div>
<div class="a" style="left:846px;top:179px;font:20px/20px 'Liberation Mono', monospace;color:#2a2a2a;white-space:pre;-webkit-text-stroke:0.6px #2a2a2a">7</div>
<div class="a" style="left:870px;top:171px;width:1px;height:35px;background:#ececec;"></div>
<div class="a" style="left:883px;top:179px;font:20px/20px 'Liberation Mono', monospace;color:#2a2a2a;white-space:pre;-webkit-text-stroke:0.6px #2a2a2a">8</div>
<div class="a" style="left:907px;top:171px;width:1px;height:35px;background:#ececec;"></div>
<div class="a" style="left:920px;top:179px;font:20px/20px 'Liberation Mono', monospace;color:#2a2a2a;white-space:pre;-webkit-text-stroke:0.6px #2a2a2a">9</div>
<div class="a" style="left:945px;top:171px;width:1px;height:35px;background:#ececec;"></div>
<div class="a" style="left:958px;top:179px;font:20px/20px 'Liberation Mono', monospace;color:#2a2a2a;white-space:pre;-webkit-text-stroke:0.6px #2a2a2a">A</div>
<div class="a" style="left:983px;top:171px;width:1px;height:35px;background:#ececec;"></div>
<div class="a" style="left:996px;top:179px;font:20px/20px 'Liberation Mono', monospace;color:#2a2a2a;white-space:pre;-webkit-text-stroke:0.6px #2a2a2a">B</div>
<div class="a" style="left:1020px;top:171px;width:1px;height:35px;background:#ececec;"></div>
<div class="a" style="left:1033px;top:179px;font:20px/20px 'Liberation Mono', monospace;color:#2a2a2a;white-space:pre;-webkit-text-stroke:0.6px #2a2a2a">C</div>
<div class="a" style="left:1057px;top:171px;width:1px;height:35px;background:#ececec;"></div>
<div class="a" style="left:1070px;top:179px;font:20px/20px 'Liberation Mono', monospace;color:#2a2a2a;white-space:pre;-webkit-text-stroke:0.6px #2a2a2a">D</div>
<div class="a" style="left:1095px;top:171px;width:1px;height:35px;background:#ececec;"></div>
<div class="a" style="left:1108px;top:179px;font:20px/20px 'Liberation Mono', monospace;color:#2a2a2a;white-space:pre;-webkit-text-stroke:0.6px #2a2a2a">E</div>
<div class="a" style="left:1133px;top:171px;width:1px;height:35px;background:#ececec;"></div>
<div class="a" style="left:1146px;top:179px;font:20px/20px 'Liberation Mono', monospace;color:#2a2a2a;white-space:pre;-webkit-text-stroke:0.6px #2a2a2a">F</div>
<div class="a" style="left:571px;top:209px;width:603px;height:240px;background:#e6e6f3;"></div>
<div class="a" style="left:466px;top:210px;width:102px;height:32px;background:#fdfdfd;"></div>
<div class="a" style="left:474px;top:217px;font:20px/20px 'Liberation Mono', monospace;color:#2a2a2a;white-space:pre;-webkit-text-stroke:0.6px #2a2a2a">9E0</div>
<div class="a" style="left:577px;top:217px;font:20px/20px 'Liberation Mono', monospace;color:#404040;white-space:pre;">48</div>
<div class="a" style="left:614px;top:217px;font:20px/20px 'Liberation Mono', monospace;color:#404040;white-space:pre;">83</div>
<div class="a" style="left:652px;top:217px;font:20px/20px 'Liberation Mono', monospace;color:#404040;white-space:pre;">EC</div>
<div class="a" style="left:690px;top:217px;font:20px/20px 'Liberation Mono', monospace;color:#404040;white-space:pre;">28</div>
<div class="a" style="left:727px;top:217px;font:20px/20px 'Liberation Mono', monospace;color:#404040;white-space:pre;">48</div>
<div class="a" style="left:764px;top:217px;font:20px/20px 'Liberation Mono', monospace;color:#404040;white-space:pre;">8B</div>
<div class="a" style="left:802px;top:217px;font:20px/20px 'Liberation Mono', monospace;color:#404040;white-space:pre;">05</div>
<div class="a" style="left:840px;top:217px;font:20px/20px 'Liberation Mono', monospace;color:#404040;white-space:pre;">C5</div>
<div class="a" style="left:877px;top:217px;font:20px/20px 'Liberation Mono', monospace;color:#404040;white-space:pre;">30</div>
<div class="a" style="left:914px;top:217px;font:20px/20px 'Liberation Mono', monospace;color:#404040;white-space:pre;">00</div>
<div class="a" style="left:952px;top:217px;font:20px/20px 'Liberation Mono', monospace;color:#404040;white-space:pre;">00</div>
<div class="a" style="left:990px;top:217px;font:20px/20px 'Liberation Mono', monospace;color:#404040;white-space:pre;">C7</div>
<div class="a" style="left:1027px;top:217px;font:20px/20px 'Liberation Mono', monospace;color:#404040;white-space:pre;">00</div>
<div class="a" style="left:1064px;top:217px;font:20px/20px 'Liberation Mono', monospace;color:#404040;white-space:pre;">00</div>
<div class="a" style="left:1102px;top:217px;font:20px/20px 'Liberation Mono', monospace;color:#404040;white-space:pre;">00</div>
<div class="a" style="left:1140px;top:217px;font:20px/20px 'Liberation Mono', monospace;color:#404040;white-space:pre;">00</div>
<div class="a" style="left:466px;top:244px;width:102px;height:32px;background:#fdfdfd;"></div>
<div class="a" style="left:474px;top:251px;font:20px/20px 'Liberation Mono', monospace;color:#2a2a2a;white-space:pre;-webkit-text-stroke:0.6px #2a2a2a">9F0</div>
<div class="a" style="left:577px;top:251px;font:20px/20px 'Liberation Mono', monospace;color:#404040;white-space:pre;">00</div>
<div class="a" style="left:614px;top:251px;font:20px/20px 'Liberation Mono', monospace;color:#404040;white-space:pre;">E8</div>
<div class="a" style="left:652px;top:251px;font:20px/20px 'Liberation Mono', monospace;color:#404040;white-space:pre;">8A</div>
<div class="a" style="left:690px;top:251px;font:20px/20px 'Liberation Mono', monospace;color:#404040;white-space:pre;">FD</div>
<div class="a" style="left:727px;top:251px;font:20px/20px 'Liberation Mono', monospace;color:#404040;white-space:pre;">FF</div>
<div class="a" style="left:764px;top:251px;font:20px/20px 'Liberation Mono', monospace;color:#404040;white-space:pre;">FF</div>
<div class="a" style="left:802px;top:251px;font:20px/20px 'Liberation Mono', monospace;color:#404040;white-space:pre;">90</div>
<div class="a" style="left:840px;top:251px;font:20px/20px 'Liberation Mono', monospace;color:#404040;white-space:pre;">90</div>
<div class="a" style="left:877px;top:251px;font:20px/20px 'Liberation Mono', monospace;color:#404040;white-space:pre;">48</div>
<div class="a" style="left:914px;top:251px;font:20px/20px 'Liberation Mono', monospace;color:#404040;white-space:pre;">83</div>
<div class="a" style="left:952px;top:251px;font:20px/20px 'Liberation Mono', monospace;color:#404040;white-space:pre;">C4</div>
<div class="a" style="left:990px;top:251px;font:20px/20px 'Liberation Mono', monospace;color:#404040;white-space:pre;">28</div>
<div class="a" style="left:1027px;top:251px;font:20px/20px 'Liberation Mono', monospace;color:#404040;white-space:pre;">C3</div>
<div class="a" style="left:1064px;top:251px;font:20px/20px 'Liberation Mono', monospace;color:#404040;white-space:pre;">0F</div>
<div class="a" style="left:1102px;top:251px;font:20px/20px 'Liberation Mono', monospace;color:#404040;white-space:pre;">1F</div>
<div class="a" style="left:1140px;top:251px;font:20px/20px 'Liberation Mono', monospace;color:#404040;white-space:pre;">00</div>
<div class="a" style="left:466px;top:277px;width:102px;height:32px;background:#fdfdfd;"></div>
<div class="a" style="left:474px;top:284px;font:20px/20px 'Liberation Mono', monospace;color:#2a2a2a;white-space:pre;-webkit-text-stroke:0.6px #2a2a2a">A00</div>
<div class="a" style="left:577px;top:284px;font:20px/20px 'Liberation Mono', monospace;color:#404040;white-space:pre;">E9</div>
<div class="a" style="left:614px;top:284px;font:20px/20px 'Liberation Mono', monospace;color:#404040;white-space:pre;">FB</div>
<div class="a" style="left:652px;top:284px;font:20px/20px 'Liberation Mono', monospace;color:#404040;white-space:pre;">14</div>
<div class="a" style="left:690px;top:284px;font:20px/20px 'Liberation Mono', monospace;color:#404040;white-space:pre;">00</div>
<div class="a" style="left:727px;top:284px;font:20px/20px 'Liberation Mono', monospace;color:#404040;white-space:pre;">00</div>
<div class="a" style="left:764px;top:284px;font:20px/20px 'Liberation Mono', monospace;color:#404040;white-space:pre;">90</div>
<div class="a" style="left:802px;top:284px;font:20px/20px 'Liberation Mono', monospace;color:#404040;white-space:pre;">90</div>
<div class="a" style="left:840px;top:284px;font:20px/20px 'Liberation Mono', monospace;color:#404040;white-space:pre;">90</div>
<div class="a" style="left:877px;top:284px;font:20px/20px 'Liberation Mono', monospace;color:#404040;white-space:pre;">90</div>
<div class="a" style="left:914px;top:284px;font:20px/20px 'Liberation Mono', monospace;color:#404040;white-space:pre;">90</div>
<div class="a" style="left:952px;top:284px;font:20px/20px 'Liberation Mono', monospace;color:#404040;white-space:pre;">90</div>
<div class="a" style="left:990px;top:284px;font:20px/20px 'Liberation Mono', monospace;color:#404040;white-space:pre;">90</div>
<div class="a" style="left:1027px;top:284px;font:20px/20px 'Liberation Mono', monospace;color:#404040;white-space:pre;">90</div>
<div class="a" style="left:1064px;top:284px;font:20px/20px 'Liberation Mono', monospace;color:#404040;white-space:pre;">90</div>
<div class="a" style="left:1102px;top:284px;font:20px/20px 'Liberation Mono', monospace;color:#404040;white-space:pre;">90</div>
<div class="a" style="left:1140px;top:284px;font:20px/20px 'Liberation Mono', monospace;color:#404040;white-space:pre;">90</div>
<div class="a" style="left:466px;top:311px;width:102px;height:32px;background:#fdfdfd;"></div>
<div class="a" style="left:474px;top:318px;font:20px/20px 'Liberation Mono', monospace;color:#2a2a2a;white-space:pre;-webkit-text-stroke:0.6px #2a2a2a">A10</div>
<div class="a" style="left:577px;top:318px;font:20px/20px 'Liberation Mono', monospace;color:#404040;white-space:pre;">48</div>
<div class="a" style="left:614px;top:318px;font:20px/20px 'Liberation Mono', monospace;color:#404040;white-space:pre;">8D</div>
<div class="a" style="left:652px;top:318px;font:20px/20px 'Liberation Mono', monospace;color:#404040;white-space:pre;">0D</div>
<div class="a" style="left:690px;top:318px;font:20px/20px 'Liberation Mono', monospace;color:#404040;white-space:pre;">09</div>
<div class="a" style="left:727px;top:318px;font:20px/20px 'Liberation Mono', monospace;color:#404040;white-space:pre;">00</div>
<div class="a" style="left:764px;top:318px;font:20px/20px 'Liberation Mono', monospace;color:#404040;white-space:pre;">00</div>
<div class="a" style="left:802px;top:318px;font:20px/20px 'Liberation Mono', monospace;color:#404040;white-space:pre;">00</div>
<div class="a" style="left:840px;top:318px;font:20px/20px 'Liberation Mono', monospace;color:#404040;white-space:pre;">E9</div>
<div class="a" style="left:877px;top:318px;font:20px/20px 'Liberation Mono', monospace;color:#404040;white-space:pre;">E4</div>
<div class="a" style="left:914px;top:318px;font:20px/20px 'Liberation Mono', monospace;color:#404040;white-space:pre;">FF</div>
<div class="a" style="left:952px;top:318px;font:20px/20px 'Liberation Mono', monospace;color:#404040;white-space:pre;">FF</div>
<div class="a" style="left:990px;top:318px;font:20px/20px 'Liberation Mono', monospace;color:#404040;white-space:pre;">FF</div>
<div class="a" style="left:1027px;top:318px;font:20px/20px 'Liberation Mono', monospace;color:#404040;white-space:pre;">0F</div>
<div class="a" style="left:1064px;top:318px;font:20px/20px 'Liberation Mono', monospace;color:#404040;white-space:pre;">1F</div>
<div class="a" style="left:1102px;top:318px;font:20px/20px 'Liberation Mono', monospace;color:#404040;white-space:pre;">40</div>
<div class="a" style="left:1140px;top:318px;font:20px/20px 'Liberation Mono', monospace;color:#404040;white-space:pre;">00</div>
<div class="a" style="left:466px;top:345px;width:102px;height:32px;background:#fdfdfd;"></div>
<div class="a" style="left:474px;top:352px;font:20px/20px 'Liberation Mono', monospace;color:#2a2a2a;white-space:pre;-webkit-text-stroke:0.6px #2a2a2a">A20</div>
<div class="a" style="left:577px;top:352px;font:20px/20px 'Liberation Mono', monospace;color:#404040;white-space:pre;">C3</div>
<div class="a" style="left:614px;top:352px;font:20px/20px 'Liberation Mono', monospace;color:#404040;white-space:pre;">90</div>
<div class="a" style="left:652px;top:352px;font:20px/20px 'Liberation Mono', monospace;color:#404040;white-space:pre;">90</div>
<div class="a" style="left:690px;top:352px;font:20px/20px 'Liberation Mono', monospace;color:#404040;white-space:pre;">90</div>
<div class="a" style="left:727px;top:352px;font:20px/20px 'Liberation Mono', monospace;color:#404040;white-space:pre;">90</div>
<div class="a" style="left:764px;top:352px;font:20px/20px 'Liberation Mono', monospace;color:#404040;white-space:pre;">90</div>
<div class="a" style="left:802px;top:352px;font:20px/20px 'Liberation Mono', monospace;color:#404040;white-space:pre;">90</div>
<div class="a" style="left:840px;top:352px;font:20px/20px 'Liberation Mono', monospace;color:#404040;white-space:pre;">90</div>
<div class="a" style="left:877px;top:352px;font:20px/20px 'Liberation Mono', monospace;color:#404040;white-space:pre;">90</div>
<div class="a" style="left:914px;top:352px;font:20px/20px 'Liberation Mono', monospace;color:#404040;white-space:pre;">90</div>
<div class="a" style="left:952px;top:352px;font:20px/20px 'Liberation Mono', monospace;color:#404040;white-space:pre;">90</div>
<div class="a" style="left:990px;top:352px;font:20px/20px 'Liberation Mono', monospace;color:#404040;white-space:pre;">90</div>
<div class="a" style="left:1027px;top:352px;font:20px/20px 'Liberation Mono', monospace;color:#404040;white-space:pre;">90</div>
<div class="a" style="left:1064px;top:352px;font:20px/20px 'Liberation Mono', monospace;color:#404040;white-space:pre;">90</div>
<div class="a" style="left:1102px;top:352px;font:20px/20px 'Liberation Mono', monospace;color:#404040;white-space:pre;">90</div>
<div class="a" style="left:1140px;top:352px;font:20px/20px 'Liberation Mono', monospace;color:#404040;white-space:pre;">90</div>
<div class="a" style="left:466px;top:379px;width:102px;height:32px;background:#fdfdfd;"></div>
<div class="a" style="left:474px;top:386px;font:20px/20px 'Liberation Mono', monospace;color:#2a2a2a;white-space:pre;-webkit-text-stroke:0.6px #2a2a2a">A30</div>
<div class="a" style="left:577px;top:386px;font:20px/20px 'Liberation Mono', monospace;color:#404040;white-space:pre;">55</div>
<div class="a" style="left:614px;top:386px;font:20px/20px 'Liberation Mono', monospace;color:#404040;white-space:pre;">48</div>
<div class="a" style="left:652px;top:386px;font:20px/20px 'Liberation Mono', monospace;color:#404040;white-space:pre;">89</div>
<div class="a" style="left:690px;top:386px;font:20px/20px 'Liberation Mono', monospace;color:#404040;white-space:pre;">E5</div>
<div class="a" style="left:727px;top:386px;font:20px/20px 'Liberation Mono', monospace;color:#404040;white-space:pre;">48</div>
<div class="a" style="left:764px;top:386px;font:20px/20px 'Liberation Mono', monospace;color:#404040;white-space:pre;">83</div>
<div class="a" style="left:802px;top:386px;font:20px/20px 'Liberation Mono', monospace;color:#404040;white-space:pre;">EC</div>
<div class="a" style="left:840px;top:386px;font:20px/20px 'Liberation Mono', monospace;color:#404040;white-space:pre;">30</div>
<div class="a" style="left:877px;top:386px;font:20px/20px 'Liberation Mono', monospace;color:#404040;white-space:pre;">48</div>
<div class="a" style="left:914px;top:386px;font:20px/20px 'Liberation Mono', monospace;color:#404040;white-space:pre;">89</div>
<div class="a" style="left:952px;top:386px;font:20px/20px 'Liberation Mono', monospace;color:#404040;white-space:pre;">4D</div>
<div class="a" style="left:990px;top:386px;font:20px/20px 'Liberation Mono', monospace;color:#404040;white-space:pre;">10</div>
<div class="a" style="left:1027px;top:386px;font:20px/20px 'Liberation Mono', monospace;color:#404040;white-space:pre;">48</div>
<div class="a" style="left:1064px;top:386px;font:20px/20px 'Liberation Mono', monospace;color:#404040;white-space:pre;">8B</div>
<div class="a" style="left:1102px;top:386px;font:20px/20px 'Liberation Mono', monospace;color:#404040;white-space:pre;">45</div>
<div class="a" style="left:1140px;top:386px;font:20px/20px 'Liberation Mono', monospace;color:#404040;white-space:pre;">10</div>
<div class="a" style="left:466px;top:412px;width:102px;height:37px;background:#fdfdfd;"></div>
<div class="a" style="left:474px;top:419px;font:20px/20px 'Liberation Mono', monospace;color:#2a2a2a;white-space:pre;-webkit-text-stroke:0.6px #2a2a2a">A40</div>
<div class="a" style="left:577px;top:419px;font:20px/20px 'Liberation Mono', monospace;color:#404040;white-space:pre;">48</div>
<div class="a" style="left:614px;top:419px;font:20px/20px 'Liberation Mono', monospace;color:#404040;white-space:pre;">89</div>
<div class="a" style="left:652px;top:419px;font:20px/20px 'Liberation Mono', monospace;color:#404040;white-space:pre;">45</div>
<div class="a" style="left:690px;top:419px;font:20px/20px 'Liberation Mono', monospace;color:#404040;white-space:pre;">F8</div>
<div class="a" style="left:727px;top:419px;font:20px/20px 'Liberation Mono', monospace;color:#404040;white-space:pre;">48</div>
<div class="a" style="left:764px;top:419px;font:20px/20px 'Liberation Mono', monospace;color:#404040;white-space:pre;">8B</div>
<div class="a" style="left:802px;top:419px;font:20px/20px 'Liberation Mono', monospace;color:#404040;white-space:pre;">45</div>
<div class="a" style="left:840px;top:419px;font:20px/20px 'Liberation Mono', monospace;color:#404040;white-space:pre;">F8</div>
<div class="a" style="left:877px;top:419px;font:20px/20px 'Liberation Mono', monospace;color:#404040;white-space:pre;">48</div>
<div class="a" style="left:914px;top:419px;font:20px/20px 'Liberation Mono', monospace;color:#404040;white-space:pre;">8B</div>
<div class="a" style="left:952px;top:419px;font:20px/20px 'Liberation Mono', monospace;color:#404040;white-space:pre;">00</div>
<div class="a" style="left:990px;top:419px;font:20px/20px 'Liberation Mono', monospace;color:#404040;white-space:pre;">48</div>
<div class="a" style="left:1027px;top:419px;font:20px/20px 'Liberation Mono', monospace;color:#404040;white-space:pre;">89</div>
<div class="a" style="left:1064px;top:419px;font:20px/20px 'Liberation Mono', monospace;color:#404040;white-space:pre;">C2</div>
<div class="a" style="left:1102px;top:419px;font:20px/20px 'Liberation Mono', monospace;color:#404040;white-space:pre;">48</div>
<div class="a" style="left:1140px;top:419px;font:20px/20px 'Liberation Mono', monospace;color:#404040;white-space:pre;">8D</div>
<div class="a" style="left:1186px;top:167px;width:476px;height:283px;background:#000094;"></div>
<div class="a" style="left:1188px;top:170px;width:450px;height:39px;background:#e9e9f0;"></div>
<div class="a" style="left:1195px;top:179px;font:20px/20px 'Liberation Mono', monospace;color:#2a2a2a;white-space:pre;-webkit-text-stroke:0.6px #2a2a2a">0</div>
<div class="a" style="left:1215px;top:171px;width:1px;height:37px;background:#d0d0d8;"></div>
<div class="a" style="left:1223px;top:179px;font:20px/20px 'Liberation Mono', monospace;color:#2a2a2a;white-space:pre;-webkit-text-stroke:0.6px #2a2a2a">1</div>
<div class="a" style="left:1243px;top:171px;width:1px;height:37px;background:#d0d0d8;"></div>
<div class="a" style="left:1251px;top:179px;font:20px/20px 'Liberation Mono', monospace;color:#2a2a2a;white-space:pre;-webkit-text-stroke:0.6px #2a2a2a">2</div>
<div class="a" style="left:1271px;top:171px;width:1px;height:37px;background:#d0d0d8;"></div>
<div class="a" style="left:1279px;top:179px;font:20px/20px 'Liberation Mono', monospace;color:#2a2a2a;white-space:pre;-webkit-text-stroke:0.6px #2a2a2a">3</div>
<div class="a" style="left:1299px;top:171px;width:1px;height:37px;background:#d0d0d8;"></div>
<div class="a" style="left:1307px;top:179px;font:20px/20px 'Liberation Mono', monospace;color:#2a2a2a;white-space:pre;-webkit-text-stroke:0.6px #2a2a2a">4</div>
<div class="a" style="left:1327px;top:171px;width:1px;height:37px;background:#d0d0d8;"></div>
<div class="a" style="left:1335px;top:179px;font:20px/20px 'Liberation Mono', monospace;color:#2a2a2a;white-space:pre;-webkit-text-stroke:0.6px #2a2a2a">5</div>
<div class="a" style="left:1355px;top:171px;width:1px;height:37px;background:#d0d0d8;"></div>
<div class="a" style="left:1363px;top:179px;font:20px/20px 'Liberation Mono', monospace;color:#2a2a2a;white-space:pre;-webkit-text-stroke:0.6px #2a2a2a">6</div>
<div class="a" style="left:1383px;top:171px;width:1px;height:37px;background:#d0d0d8;"></div>
<div class="a" style="left:1391px;top:179px;font:20px/20px 'Liberation Mono', monospace;color:#2a2a2a;white-space:pre;-webkit-text-stroke:0.6px #2a2a2a">7</div>
<div class="a" style="left:1411px;top:171px;width:1px;height:37px;background:#d0d0d8;"></div>
<div class="a" style="left:1419px;top:179px;font:20px/20px 'Liberation Mono', monospace;color:#2a2a2a;white-space:pre;-webkit-text-stroke:0.6px #2a2a2a">8</div>
<div class="a" style="left:1439px;top:171px;width:1px;height:37px;background:#d0d0d8;"></div>
<div class="a" style="left:1447px;top:179px;font:20px/20px 'Liberation Mono', monospace;color:#2a2a2a;white-space:pre;-webkit-text-stroke:0.6px #2a2a2a">9</div>
<div class="a" style="left:1467px;top:171px;width:1px;height:37px;background:#d0d0d8;"></div>
<div class="a" style="left:1475px;top:179px;font:20px/20px 'Liberation Mono', monospace;color:#2a2a2a;white-space:pre;-webkit-text-stroke:0.6px #2a2a2a">A</div>
<div class="a" style="left:1496px;top:171px;width:1px;height:37px;background:#d0d0d8;"></div>
<div class="a" style="left:1504px;top:179px;font:20px/20px 'Liberation Mono', monospace;color:#2a2a2a;white-space:pre;-webkit-text-stroke:0.6px #2a2a2a">B</div>
<div class="a" style="left:1524px;top:171px;width:1px;height:37px;background:#d0d0d8;"></div>
<div class="a" style="left:1532px;top:179px;font:20px/20px 'Liberation Mono', monospace;color:#2a2a2a;white-space:pre;-webkit-text-stroke:0.6px #2a2a2a">C</div>
<div class="a" style="left:1552px;top:171px;width:1px;height:37px;background:#d0d0d8;"></div>
<div class="a" style="left:1560px;top:179px;font:20px/20px 'Liberation Mono', monospace;color:#2a2a2a;white-space:pre;-webkit-text-stroke:0.6px #2a2a2a">D</div>
<div class="a" style="left:1580px;top:171px;width:1px;height:37px;background:#d0d0d8;"></div>
<div class="a" style="left:1588px;top:179px;font:20px/20px 'Liberation Mono', monospace;color:#2a2a2a;white-space:pre;-webkit-text-stroke:0.6px #2a2a2a">E</div>
<div class="a" style="left:1608px;top:171px;width:1px;height:37px;background:#d0d0d8;"></div>
<div class="a" style="left:1616px;top:179px;font:20px/20px 'Liberation Mono', monospace;color:#2a2a2a;white-space:pre;-webkit-text-stroke:0.6px #2a2a2a">F</div>
<div class="a" style="left:1195px;top:217px;font:20px/20px 'Liberation Mono', monospace;color:#f4f4ff;white-space:pre;">H</div>
<div class="a" style="left:1223px;top:217px;font:20px/20px 'Liberation Mono', monospace;color:#f4f4ff;white-space:pre;">.</div>
<div class="a" style="left:1251px;top:217px;font:20px/20px 'Liberation Mono', monospace;color:#f4f4ff;white-space:pre;">ì</div>
<div class="a" style="left:1279px;top:217px;font:20px/20px 'Liberation Mono', monospace;color:#f4f4ff;white-space:pre;">(</div>
<div class="a" style="left:1307px;top:217px;font:20px/20px 'Liberation Mono', monospace;color:#f4f4ff;white-space:pre;">H</div>
<div class="a" style="left:1335px;top:217px;font:20px/20px 'Liberation Mono', monospace;color:#f4f4ff;white-space:pre;">.</div>
<div class="a" style="left:1363px;top:217px;font:20px/20px 'Liberation Mono', monospace;color:#f4f4ff;white-space:pre;">.</div>
<div class="a" style="left:1391px;top:217px;font:20px/20px 'Liberation Mono', monospace;color:#f4f4ff;white-space:pre;">Å</div>
<div class="a" style="left:1419px;top:217px;font:20px/20px 'Liberation Mono', monospace;color:#f4f4ff;white-space:pre;">0</div>
<div class="a" style="left:1447px;top:217px;font:20px/20px 'Liberation Mono', monospace;color:#f4f4ff;white-space:pre;">.</div>
<div class="a" style="left:1475px;top:217px;font:20px/20px 'Liberation Mono', monospace;color:#f4f4ff;white-space:pre;">.</div>
<div class="a" style="left:1504px;top:217px;font:20px/20px 'Liberation Mono', monospace;color:#f4f4ff;white-space:pre;">Ç</div>
<div class="a" style="left:1532px;top:217px;font:20px/20px 'Liberation Mono', monospace;color:#f4f4ff;white-space:pre;">.</div>
<div class="a" style="left:1560px;top:217px;font:20px/20px 'Liberation Mono', monospace;color:#f4f4ff;white-space:pre;">.</div>
<div class="a" style="left:1588px;top:217px;font:20px/20px 'Liberation Mono', monospace;color:#f4f4ff;white-space:pre;">.</div>
<div class="a" style="left:1616px;top:217px;font:20px/20px 'Liberation Mono', monospace;color:#f4f4ff;white-space:pre;">.</div>
<div class="a" style="left:1195px;top:251px;font:20px/20px 'Liberation Mono', monospace;color:#f4f4ff;white-space:pre;">.</div>
<div class="a" style="left:1223px;top:251px;font:20px/20px 'Liberation Mono', monospace;color:#f4f4ff;white-space:pre;">è</div>
<div class="a" style="left:1251px;top:251px;font:20px/20px 'Liberation Mono', monospace;color:#f4f4ff;white-space:pre;">.</div>
<div class="a" style="left:1279px;top:251px;font:20px/20px 'Liberation Mono', monospace;color:#f4f4ff;white-space:pre;">ý</div>
<div class="a" style="left:1307px;top:251px;font:20px/20px 'Liberation Mono', monospace;color:#f4f4ff;white-space:pre;">ÿ</div>
<div class="a" style="left:1335px;top:251px;font:20px/20px 'Liberation Mono', monospace;color:#f4f4ff;white-space:pre;">ÿ</div>
<div class="a" style="left:1363px;top:251px;font:20px/20px 'Liberation Mono', monospace;color:#f4f4ff;white-space:pre;">.</div>
<div class="a" style="left:1391px;top:251px;font:20px/20px 'Liberation Mono', monospace;color:#f4f4ff;white-space:pre;">.</div>
<div class="a" style="left:1419px;top:251px;font:20px/20px 'Liberation Mono', monospace;color:#f4f4ff;white-space:pre;">H</div>
<div class="a" style="left:1447px;top:251px;font:20px/20px 'Liberation Mono', monospace;color:#f4f4ff;white-space:pre;">.</div>
<div class="a" style="left:1475px;top:251px;font:20px/20px 'Liberation Mono', monospace;color:#f4f4ff;white-space:pre;">Ä</div>
<div class="a" style="left:1504px;top:251px;font:20px/20px 'Liberation Mono', monospace;color:#f4f4ff;white-space:pre;">(</div>
<div class="a" style="left:1532px;top:251px;font:20px/20px 'Liberation Mono', monospace;color:#f4f4ff;white-space:pre;">Ã</div>
<div class="a" style="left:1560px;top:251px;font:20px/20px 'Liberation Mono', monospace;color:#f4f4ff;white-space:pre;">.</div>
<div class="a" style="left:1588px;top:251px;font:20px/20px 'Liberation Mono', monospace;color:#f4f4ff;white-space:pre;">.</div>
<div class="a" style="left:1616px;top:251px;font:20px/20px 'Liberation Mono', monospace;color:#f4f4ff;white-space:pre;">.</div>
<div class="a" style="left:1195px;top:284px;font:20px/20px 'Liberation Mono', monospace;color:#f4f4ff;white-space:pre;">é</div>
<div class="a" style="left:1223px;top:284px;font:20px/20px 'Liberation Mono', monospace;color:#f4f4ff;white-space:pre;">û</div>
<div class="a" style="left:1251px;top:284px;font:20px/20px 'Liberation Mono', monospace;color:#f4f4ff;white-space:pre;">.</div>
<div class="a" style="left:1279px;top:284px;font:20px/20px 'Liberation Mono', monospace;color:#f4f4ff;white-space:pre;">.</div>
<div class="a" style="left:1307px;top:284px;font:20px/20px 'Liberation Mono', monospace;color:#f4f4ff;white-space:pre;">.</div>
<div class="a" style="left:1335px;top:284px;font:20px/20px 'Liberation Mono', monospace;color:#f4f4ff;white-space:pre;">.</div>
<div class="a" style="left:1363px;top:284px;font:20px/20px 'Liberation Mono', monospace;color:#f4f4ff;white-space:pre;">.</div>
<div class="a" style="left:1391px;top:284px;font:20px/20px 'Liberation Mono', monospace;color:#f4f4ff;white-space:pre;">.</div>
<div class="a" style="left:1419px;top:284px;font:20px/20px 'Liberation Mono', monospace;color:#f4f4ff;white-space:pre;">.</div>
<div class="a" style="left:1447px;top:284px;font:20px/20px 'Liberation Mono', monospace;color:#f4f4ff;white-space:pre;">.</div>
<div class="a" style="left:1475px;top:284px;font:20px/20px 'Liberation Mono', monospace;color:#f4f4ff;white-space:pre;">.</div>
<div class="a" style="left:1504px;top:284px;font:20px/20px 'Liberation Mono', monospace;color:#f4f4ff;white-space:pre;">.</div>
<div class="a" style="left:1532px;top:284px;font:20px/20px 'Liberation Mono', monospace;color:#f4f4ff;white-space:pre;">.</div>
<div class="a" style="left:1560px;top:284px;font:20px/20px 'Liberation Mono', monospace;color:#f4f4ff;white-space:pre;">.</div>
<div class="a" style="left:1588px;top:284px;font:20px/20px 'Liberation Mono', monospace;color:#f4f4ff;white-space:pre;">.</div>
<div class="a" style="left:1616px;top:284px;font:20px/20px 'Liberation Mono', monospace;color:#f4f4ff;white-space:pre;">.</div>
<div class="a" style="left:1195px;top:318px;font:20px/20px 'Liberation Mono', monospace;color:#f4f4ff;white-space:pre;">H</div>
<div class="a" style="left:1223px;top:318px;font:20px/20px 'Liberation Mono', monospace;color:#f4f4ff;white-space:pre;">.</div>
<div class="a" style="left:1251px;top:318px;font:20px/20px 'Liberation Mono', monospace;color:#f4f4ff;white-space:pre;">.</div>
<div class="a" style="left:1279px;top:318px;font:20px/20px 'Liberation Mono', monospace;color:#f4f4ff;white-space:pre;">.</div>
<div class="a" style="left:1307px;top:318px;font:20px/20px 'Liberation Mono', monospace;color:#f4f4ff;white-space:pre;">.</div>
<div class="a" style="left:1335px;top:318px;font:20px/20px 'Liberation Mono', monospace;color:#f4f4ff;white-space:pre;">.</div>
<div class="a" style="left:1363px;top:318px;font:20px/20px 'Liberation Mono', monospace;color:#f4f4ff;white-space:pre;">.</div>
<div class="a" style="left:1391px;top:318px;font:20px/20px 'Liberation Mono', monospace;color:#f4f4ff;white-space:pre;">é</div>
<div class="a" style="left:1419px;top:318px;font:20px/20px 'Liberation Mono', monospace;color:#f4f4ff;white-space:pre;">ä</div>
<div class="a" style="left:1447px;top:318px;font:20px/20px 'Liberation Mono', monospace;color:#f4f4ff;white-space:pre;">ÿ</div>
<div class="a" style="left:1475px;top:318px;font:20px/20px 'Liberation Mono', monospace;color:#f4f4ff;white-space:pre;">ÿ</div>
<div class="a" style="left:1504px;top:318px;font:20px/20px 'Liberation Mono', monospace;color:#f4f4ff;white-space:pre;">ÿ</div>
<div class="a" style="left:1532px;top:318px;font:20px/20px 'Liberation Mono', monospace;color:#f4f4ff;white-space:pre;">.</div>
<div class="a" style="left:1560px;top:318px;font:20px/20px 'Liberation Mono', monospace;color:#f4f4ff;white-space:pre;">.</div>
<div class="a" style="left:1588px;top:318px;font:20px/20px 'Liberation Mono', monospace;color:#f4f4ff;white-space:pre;">@</div>
<div class="a" style="left:1616px;top:318px;font:20px/20px 'Liberation Mono', monospace;color:#f4f4ff;white-space:pre;">.</div>
<div class="a" style="left:1195px;top:352px;font:20px/20px 'Liberation Mono', monospace;color:#f4f4ff;white-space:pre;">Ã</div>
<div class="a" style="left:1223px;top:352px;font:20px/20px 'Liberation Mono', monospace;color:#f4f4ff;white-space:pre;">.</div>
<div class="a" style="left:1251px;top:352px;font:20px/20px 'Liberation Mono', monospace;color:#f4f4ff;white-space:pre;">.</div>
<div class="a" style="left:1279px;top:352px;font:20px/20px 'Liberation Mono', monospace;color:#f4f4ff;white-space:pre;">.</div>
<div class="a" style="left:1307px;top:352px;font:20px/20px 'Liberation Mono', monospace;color:#f4f4ff;white-space:pre;">.</div>
<div class="a" style="left:1335px;top:352px;font:20px/20px 'Liberation Mono', monospace;color:#f4f4ff;white-space:pre;">.</div>
<div class="a" style="left:1363px;top:352px;font:20px/20px 'Liberation Mono', monospace;color:#f4f4ff;white-space:pre;">.</div>
<div class="a" style="left:1391px;top:352px;font:20px/20px 'Liberation Mono', monospace;color:#f4f4ff;white-space:pre;">.</div>
<div class="a" style="left:1419px;top:352px;font:20px/20px 'Liberation Mono', monospace;color:#f4f4ff;white-space:pre;">.</div>
<div class="a" style="left:1447px;top:352px;font:20px/20px 'Liberation Mono', monospace;color:#f4f4ff;white-space:pre;">.</div>
<div class="a" style="left:1475px;top:352px;font:20px/20px 'Liberation Mono', monospace;color:#f4f4ff;white-space:pre;">.</div>
<div class="a" style="left:1504px;top:352px;font:20px/20px 'Liberation Mono', monospace;color:#f4f4ff;white-space:pre;">.</div>
<div class="a" style="left:1532px;top:352px;font:20px/20px 'Liberation Mono', monospace;color:#f4f4ff;white-space:pre;">.</div>
<div class="a" style="left:1560px;top:352px;font:20px/20px 'Liberation Mono', monospace;color:#f4f4ff;white-space:pre;">.</div>
<div class="a" style="left:1588px;top:352px;font:20px/20px 'Liberation Mono', monospace;color:#f4f4ff;white-space:pre;">.</div>
<div class="a" style="left:1616px;top:352px;font:20px/20px 'Liberation Mono', monospace;color:#f4f4ff;white-space:pre;">.</div>
<div class="a" style="left:1195px;top:386px;font:20px/20px 'Liberation Mono', monospace;color:#f4f4ff;white-space:pre;">U</div>
<div class="a" style="left:1223px;top:386px;font:20px/20px 'Liberation Mono', monospace;color:#f4f4ff;white-space:pre;">H</div>
<div class="a" style="left:1251px;top:386px;font:20px/20px 'Liberation Mono', monospace;color:#f4f4ff;white-space:pre;">.</div>
<div class="a" style="left:1279px;top:386px;font:20px/20px 'Liberation Mono', monospace;color:#f4f4ff;white-space:pre;">å</div>
<div class="a" style="left:1307px;top:386px;font:20px/20px 'Liberation Mono', monospace;color:#f4f4ff;white-space:pre;">H</div>
<div class="a" style="left:1335px;top:386px;font:20px/20px 'Liberation Mono', monospace;color:#f4f4ff;white-space:pre;">.</div>
<div class="a" style="left:1363px;top:386px;font:20px/20px 'Liberation Mono', monospace;color:#f4f4ff;white-space:pre;">ì</div>
<div class="a" style="left:1391px;top:386px;font:20px/20px 'Liberation Mono', monospace;color:#f4f4ff;white-space:pre;">0</div>
<div class="a" style="left:1419px;top:386px;font:20px/20px 'Liberation Mono', monospace;color:#f4f4ff;white-space:pre;">H</div>
<div class="a" style="left:1447px;top:386px;font:20px/20px 'Liberation Mono', monospace;color:#f4f4ff;white-space:pre;">.</div>
<div class="a" style="left:1475px;top:386px;font:20px/20px 'Liberation Mono', monospace;color:#f4f4ff;white-space:pre;">M</div>
<div class="a" style="left:1504px;top:386px;font:20px/20px 'Liberation Mono', monospace;color:#f4f4ff;white-space:pre;">.</div>
<div class="a" style="left:1532px;top:386px;font:20px/20px 'Liberation Mono', monospace;color:#f4f4ff;white-space:pre;">H</div>
<div class="a" style="left:1560px;top:386px;font:20px/20px 'Liberation Mono', monospace;color:#f4f4ff;white-space:pre;">.</div>
<div class="a" style="left:1588px;top:386px;font:20px/20px 'Liberation Mono', monospace;color:#f4f4ff;white-space:pre;">E</div>
<div class="a" style="left:1616px;top:386px;font:20px/20px 'Liberation Mono', monospace;color:#f4f4ff;white-space:pre;">.</div>
<div class="a" style="left:1195px;top:419px;font:20px/20px 'Liberation Mono', monospace;color:#f4f4ff;white-space:pre;">H</div>
<div class="a" style="left:1223px;top:419px;font:20px/20px 'Liberation Mono', monospace;color:#f4f4ff;white-space:pre;">.</div>
<div class="a" style="left:1251px;top:419px;font:20px/20px 'Liberation Mono', monospace;color:#f4f4ff;white-space:pre;">E</div>
<div class="a" style="left:1279px;top:419px;font:20px/20px 'Liberation Mono', monospace;color:#f4f4ff;white-space:pre;">ø</div>
<div class="a" style="left:1307px;top:419px;font:20px/20px 'Liberation Mono', monospace;color:#f4f4ff;white-space:pre;">H</div>
<div class="a" style="left:1335px;top:419px;font:20px/20px 'Liberation Mono', monospace;color:#f4f4ff;white-space:pre;">.</div>
<div class="a" style="left:1363px;top:419px;font:20px/20px 'Liberation Mono', monospace;color:#f4f4ff;white-space:pre;">E</div>
<div class="a" style="left:1391px;top:419px;font:20px/20px 'Liberation Mono', monospace;color:#f4f4ff;white-space:pre;">ø</div>
<div class="a" style="left:1419px;top:419px;font:20px/20px 'Liberation Mono', monospace;color:#f4f4ff;white-space:pre;">H</div>
<div class="a" style="left:1447px;top:419px;font:20px/20px 'Liberation Mono', monospace;color:#f4f4ff;white-space:pre;">.</div>
<div class="a" style="left:1475px;top:419px;font:20px/20px 'Liberation Mono', monospace;color:#f4f4ff;white-space:pre;">.</div>
<div class="a" style="left:1504px;top:419px;font:20px/20px 'Liberation Mono', monospace;color:#f4f4ff;white-space:pre;">H</div>
<div class="a" style="left:1532px;top:419px;font:20px/20px 'Liberation Mono', monospace;color:#f4f4ff;white-space:pre;">.</div>
<div class="a" style="left:1560px;top:419px;font:20px/20px 'Liberation Mono', monospace;color:#f4f4ff;white-space:pre;">Â</div>
<div class="a" style="left:1588px;top:419px;font:20px/20px 'Liberation Mono', monospace;color:#f4f4ff;white-space:pre;">H</div>
<div class="a" style="left:1616px;top:419px;font:20px/20px 'Liberation Mono', monospace;color:#f4f4ff;white-space:pre;">.</div>
<div class="a" style="left:1646px;top:195px;width:2px;height:50px;background:#c8c8e8;opacity:.7"></div>
<div class="a" style="left:1662px;top:167px;width:8px;height:283px;background:#f6f6fb;"></div>
<div class="a" style="left:1670px;top:167px;width:102px;height:1065px;background:#000000;"></div>
<div class="a" style="left:1705px;top:191px;width:39px;height:1019px;background:none;box-sizing:border-box;border:1.5px solid #b8b8b8;background:transparent"></div>
<div class="a" style="left:1706px;top:202px;width:37px;height:52px;background:#0b0b84;"></div>
<div class="a" style="left:1706px;top:254px;width:37px;height:4px;background:#9ad07a;"></div>
<div class="a" style="left:1706px;top:258px;width:37px;height:22px;background:#2e6a1c;"></div>
<div class="a" style="left:1706px;top:280px;width:37px;height:8px;background:#7a1a10;"></div>
<div class="a" style="left:1706px;top:288px;width:37px;height:5px;background:#a05a90;"></div>
<div class="a" style="left:1706px;top:293px;width:37px;height:18px;background:#6e6a20;"></div>
<div class="a" style="left:1706px;top:311px;width:37px;height:3px;background:#8cc060;"></div>
<div class="a" style="left:1706px;top:314px;width:37px;height:3px;background:#c04060;"></div>
<div class="a" style="left:1706px;top:317px;width:37px;height:13px;background:#4a0a80;"></div>
<div class="a" style="left:1706px;top:330px;width:37px;height:3px;background:#4040c0;"></div>
<div class="a" style="left:1706px;top:333px;width:37px;height:10px;background:#6e6a20;"></div>
<div class="a" style="left:1706px;top:343px;width:37px;height:3px;background:#a0d070;"></div>
<div class="a" style="left:1706px;top:346px;width:37px;height:342px;background:#2e6a1c;"></div>
<div class="a" style="left:1706px;top:688px;width:37px;height:67px;background:#641a10;"></div>
<div class="a" style="left:1706px;top:755px;width:37px;height:60px;background:#4a1080;"></div>
<div class="a" style="left:1706px;top:815px;width:37px;height:18px;background:#000080;"></div>
<div class="a" style="left:1706px;top:833px;width:37px;height:7px;background:#7a7a30;"></div>
<div class="a" style="left:1706px;top:840px;width:37px;height:53px;background:#2e6a1c;"></div>
<div class="a" style="left:1706px;top:893px;width:37px;height:38px;background:#641a10;"></div>
<div class="a" style="left:1706px;top:931px;width:37px;height:3px;background:#a040c0;"></div>
<div class="a" style="left:1670px;top:207px;width:102px;height:8px;background:#9a9a9a;opacity:.85"></div>
<svg style="left:1670px;top:197px" width="102" height="4"><line x1="0" y1="2" x2="102" y2="2" stroke="#cfcfcf" stroke-width="2.5" stroke-dasharray="7,5"/></svg>
<div class="a" style="left:1681px;top:190px;font:19px/19px 'Liberation Sans', sans-serif;color:#e02424;white-space:pre;transform:scaleX(0.95);transform-origin:0 0;opacity:.9">9E0</div>
<div class="a" style="left:468px;top:465px;width:165px;height:40px;background:#f2f2f2;box-sizing:border-box;border:1px solid #e2e2e2;border-bottom:none"></div>
<div class="a" style="left:487px;top:476px;font:22px/22px 'Liberation Sans', sans-serif;color:#2c2c2c;white-space:pre;">Disasm: .text</div>
<div class="a" style="left:639px;top:465px;width:117px;height:40px;background:#f2f2f2;box-sizing:border-box;border:1px solid #e2e2e2;border-bottom:none"></div>
<div class="a" style="left:657px;top:476px;font:22px/22px 'Liberation Sans', sans-serif;color:#2c2c2c;white-space:pre;">General</div>
<div class="a" style="left:760px;top:465px;width:109px;height:40px;background:#f2f2f2;box-sizing:border-box;border:1px solid #e2e2e2;border-bottom:none"></div>
<div class="a" style="left:780px;top:476px;font:22px/22px 'Liberation Sans', sans-serif;color:#2c2c2c;white-space:pre;">Strings</div>
<div class="a" style="left:876px;top:465px;width:126px;height:40px;background:#f2f2f2;box-sizing:border-box;border:1px solid #e2e2e2;border-bottom:none"></div>
<div class="a" style="left:894px;top:476px;font:22px/22px 'Liberation Sans', sans-serif;color:#2c2c2c;white-space:pre;">DOS Hdr</div>
<div class="a" style="left:1008px;top:465px;width:108px;height:40px;background:#f2f2f2;box-sizing:border-box;border:1px solid #e2e2e2;border-bottom:none"></div>
<div class="a" style="left:1026px;top:476px;font:22px/22px 'Liberation Sans', sans-serif;color:#2c2c2c;white-space:pre;">File Hdr</div>
<div class="a" style="left:1324px;top:465px;width:148px;height:40px;background:#f2f2f2;box-sizing:border-box;border:1px solid #e2e2e2;border-bottom:none"></div>
<div class="a" style="left:1323px;top:476px;font:22px/22px 'Liberation Sans', sans-serif;color:#2c2c2c;white-space:pre;">Section Hdrs</div>
<div class="a" style="left:1476px;top:465px;width:136px;height:40px;background:#f2f2f2;box-sizing:border-box;border:1px solid #e2e2e2;border-bottom:none"></div>
<div class="a" style="left:1528px;top:476px;font:22px/22px 'Liberation Sans', sans-serif;color:#2c2c2c;white-space:pre;">Imports</div>
<div class="a" style="left:1122px;top:460px;width:186px;height:46px;background:#fafafa;box-sizing:border-box;border:1px solid #dedede;border-bottom:none"></div>
<div class="a" style="left:1149px;top:474px;font:22px/22px 'Liberation Sans', sans-serif;color:#2c2c2c;white-space:pre;">Optional Hdr</div>
<svg style="left:1498px;top:474px" width="23" height="18"><path d="M1 3 Q1 1 3 1 L8 1 L10 3.5 L20 3.5 Q22 3.5 22 5.5 L22 16 Q22 17.5 20.5 17.5 L2.5 17.5 Q1 17.5 1 16Z" fill="#7a7a7a"/></svg>
<div class="a" style="left:1630px;top:462px;width:30px;height:44px;background:#e9eef5;"></div>
<svg style="left:1612px;top:471px" width="16" height="25"><path d="M14 1 L1 12.5 L14 24Z" fill="#9a9a9a"/></svg>
<svg style="left:1639px;top:471px" width="16" height="25"><path d="M1 1 L14 12.5 L1 24Z" fill="#111"/></svg>
<div class="a" style="left:467px;top:507px;width:1183px;height:717px;background:#ffffff;box-sizing:border-box;border:1px solid #e0e0e0"></div>
<div class="a" style="left:468px;top:508px;width:1181px;height:45px;background:#ffffff;"></div>
<div class="a" style="left:617px;top:512px;width:1px;height:682px;background:#ececec;"></div>
<div class="a" style="left:930px;top:512px;width:1px;height:682px;background:#ececec;"></div>
<div class="a" style="left:1117px;top:512px;width:1px;height:682px;background:#ececec;"></div>
<div class="a" style="left:468px;top:552px;width:1181px;height:1px;background:#efefef;"></div>
<div class="a" style="left:477px;top:523px;font:22px/22px 'Liberation Sans', sans-serif;color:#2c2c2c;white-space:pre;">Offset</div>
<div class="a" style="left:626px;top:523px;font:22px/22px 'Liberation Sans', sans-serif;color:#2c2c2c;white-space:pre;">Name</div>
<div class="a" style="left:939px;top:523px;font:22px/22px 'Liberation Sans', sans-serif;color:#2c2c2c;white-space:pre;">Value</div>
<div class="a" style="left:1127px;top:523px;font:22px/22px 'Liberation Sans', sans-serif;color:#2c2c2c;white-space:pre;">Value</div>
<div class="a" style="left:512px;top:562px;font:22px/22px 'Liberation Sans', sans-serif;color:#2c2c2c;white-space:pre;">F8</div>
<div class="a" style="left:625px;top:562px;font:22px/22px 'Liberation Sans', sans-serif;color:#2c2c2c;white-space:pre;">Size of Heap Commit</div>
<div class="a" style="left:938px;top:562px;font:22px/22px 'Liberation Sans', sans-serif;color:#2c2c2c;white-space:pre;">1000</div>
<div class="a" style="left:512px;top:596px;font:22px/22px 'Liberation Sans', sans-serif;color:#2c2c2c;white-space:pre;">100</div>
<div class="a" style="left:625px;top:596px;font:22px/22px 'Liberation Sans', sans-serif;color:#2c2c2c;white-space:pre;">Loader Flags</div>
<div class="a" style="left:938px;top:596px;font:22px/22px 'Liberation Sans', sans-serif;color:#2c2c2c;white-space:pre;">0</div>
<div class="a" style="left:512px;top:630px;font:22px/22px 'Liberation Sans', sans-serif;color:#2c2c2c;white-space:pre;">104</div>
<div class="a" style="left:625px;top:630px;font:22px/22px 'Liberation Sans', sans-serif;color:#2c2c2c;white-space:pre;">Number of RVAs and Sizes</div>
<div class="a" style="left:938px;top:630px;font:22px/22px 'Liberation Sans', sans-serif;color:#2c2c2c;white-space:pre;">10</div>
<div class="a" style="left:932px;top:659px;width:698px;height:26px;background:#8fa4e5;"></div>
<div class="a" style="left:625px;top:663px;font:22px/22px 'Liberation Sans', sans-serif;color:#2c2c2c;white-space:pre;">Data Directory</div>
<div class="a" style="left:938px;top:663px;font:22px/22px 'Liberation Sans', sans-serif;color:#2c2c2c;white-space:pre;">Address</div>
<div class="a" style="left:1125px;top:663px;font:22px/22px 'Liberation Sans', sans-serif;color:#2c2c2c;white-space:pre;">Size</div>
<svg style="left:480px;top:667px" width="17" height="12"><path d="M1.5 2.2 L8.2 9 L15 2.2" fill="none" stroke="#2a2a2a" stroke-width="2.1"/></svg>
<div class="a" style="left:619px;top:693px;width:311px;height:26px;background:#8fa4e5;"></div>
<div class="a" style="left:932px;top:693px;width:698px;height:26px;background:#e7e8f8;"></div>
<div class="a" style="left:932px;top:693px;width:185px;height:26px;background:#e7e8f8;"></div>
<div class="a" style="left:550px;top:697px;font:22px/22px 'Liberation Sans', sans-serif;color:#2c2c2c;white-space:pre;">108</div>
<div class="a" style="left:625px;top:697px;font:22px/22px 'Liberation Sans', sans-serif;color:#1a1a3a;white-space:pre;">Export Directory</div>
<div class="a" style="left:938px;top:697px;font:22px/22px 'Liberation Sans', sans-serif;color:#2c2c2c;white-space:pre;">0</div>
<div class="a" style="left:1125px;top:697px;font:22px/22px 'Liberation Sans', sans-serif;color:#2c2c2c;white-space:pre;">0</div>
<div class="a" style="left:619px;top:727px;width:311px;height:26px;background:#8fa4e5;"></div>
<div class="a" style="left:932px;top:727px;width:698px;height:26px;background:#e7e8f8;"></div>
<div class="a" style="left:932px;top:727px;width:185px;height:26px;background:#e7e8f8;"></div>
<div class="a" style="left:550px;top:731px;font:22px/22px 'Liberation Sans', sans-serif;color:#2c2c2c;white-space:pre;">110</div>
<div class="a" style="left:625px;top:731px;font:22px/22px 'Liberation Sans', sans-serif;color:#1a1a3a;white-space:pre;">Import Directory</div>
<div class="a" style="left:938px;top:731px;font:22px/22px 'Liberation Sans', sans-serif;color:#2c2c2c;white-space:pre;">8000</div>
<div class="a" style="left:1125px;top:731px;font:22px/22px 'Liberation Sans', sans-serif;color:#2c2c2c;white-space:pre;">880</div>
<div class="a" style="left:619px;top:760px;width:311px;height:26px;background:#8fa4e5;"></div>
<div class="a" style="left:932px;top:760px;width:698px;height:26px;background:#e7e8f8;"></div>
<div class="a" style="left:932px;top:760px;width:185px;height:26px;background:#e7e8f8;"></div>
<div class="a" style="left:550px;top:764px;font:22px/22px 'Liberation Sans', sans-serif;color:#2c2c2c;white-space:pre;">118</div>
<div class="a" style="left:625px;top:764px;font:22px/22px 'Liberation Sans', sans-serif;color:#1a1a3a;white-space:pre;">Resource Directory</div>
<div class="a" style="left:938px;top:764px;font:22px/22px 'Liberation Sans', sans-serif;color:#2c2c2c;white-space:pre;">B000</div>
<div class="a" style="left:1125px;top:764px;font:22px/22px 'Liberation Sans', sans-serif;color:#2c2c2c;white-space:pre;">4E8</div>
<div class="a" style="left:619px;top:794px;width:311px;height:26px;background:#8fa4e5;"></div>
<div class="a" style="left:932px;top:794px;width:698px;height:26px;background:#e7e8f8;"></div>
<div class="a" style="left:932px;top:794px;width:185px;height:26px;background:#e7e8f8;"></div>
<div class="a" style="left:550px;top:798px;font:22px/22px 'Liberation Sans', sans-serif;color:#2c2c2c;white-space:pre;">120</div>
<div class="a" style="left:625px;top:798px;font:22px/22px 'Liberation Sans', sans-serif;color:#1a1a3a;white-space:pre;">Exception Directory</div>
<div class="a" style="left:938px;top:798px;font:22px/22px 'Liberation Sans', sans-serif;color:#2c2c2c;white-space:pre;">5000</div>
<div class="a" style="left:1125px;top:798px;font:22px/22px 'Liberation Sans', sans-serif;color:#2c2c2c;white-space:pre;">234</div>
<div class="a" style="left:619px;top:828px;width:311px;height:26px;background:#8fa4e5;"></div>
<div class="a" style="left:932px;top:828px;width:698px;height:26px;background:#e7e8f8;"></div>
<div class="a" style="left:932px;top:828px;width:185px;height:26px;background:#e7e8f8;"></div>
<div class="a" style="left:550px;top:832px;font:22px/22px 'Liberation Sans', sans-serif;color:#2c2c2c;white-space:pre;">128</div>
<div class="a" style="left:625px;top:832px;font:22px/22px 'Liberation Sans', sans-serif;color:#1a1a3a;white-space:pre;">Security Directory</div>
<div class="a" style="left:938px;top:832px;font:22px/22px 'Liberation Sans', sans-serif;color:#2c2c2c;white-space:pre;">0</div>
<div class="a" style="left:1125px;top:832px;font:22px/22px 'Liberation Sans', sans-serif;color:#2c2c2c;white-space:pre;">0</div>
<div class="a" style="left:619px;top:862px;width:311px;height:26px;background:#8fa4e5;"></div>
<div class="a" style="left:932px;top:862px;width:698px;height:26px;background:#e7e8f8;"></div>
<div class="a" style="left:932px;top:862px;width:185px;height:26px;background:#e7e8f8;"></div>
<div class="a" style="left:550px;top:866px;font:22px/22px 'Liberation Sans', sans-serif;color:#2c2c2c;white-space:pre;">130</div>
<div class="a" style="left:625px;top:866px;font:22px/22px 'Liberation Sans', sans-serif;color:#1a1a3a;white-space:pre;">Base Relocation Table</div>
<div class="a" style="left:938px;top:866px;font:22px/22px 'Liberation Sans', sans-serif;color:#2c2c2c;white-space:pre;">C000</div>
<div class="a" style="left:1125px;top:866px;font:22px/22px 'Liberation Sans', sans-serif;color:#2c2c2c;white-space:pre;">78</div>
<div class="a" style="left:619px;top:895px;width:311px;height:26px;background:#8fa4e5;"></div>
<div class="a" style="left:932px;top:895px;width:698px;height:26px;background:#e7e8f8;"></div>
<div class="a" style="left:932px;top:895px;width:185px;height:26px;background:#e7e8f8;"></div>
<div class="a" style="left:550px;top:899px;font:22px/22px 'Liberation Sans', sans-serif;color:#2c2c2c;white-space:pre;">138</div>
<div class="a" style="left:625px;top:899px;font:22px/22px 'Liberation Sans', sans-serif;color:#1a1a3a;white-space:pre;">Debug Directory</div>
<div class="a" style="left:938px;top:899px;font:22px/22px 'Liberation Sans', sans-serif;color:#2c2c2c;white-space:pre;">0</div>
<div class="a" style="left:1125px;top:899px;font:22px/22px 'Liberation Sans', sans-serif;color:#2c2c2c;white-space:pre;">0</div>
<div class="a" style="left:619px;top:929px;width:311px;height:26px;background:#8fa4e5;"></div>
<div class="a" style="left:932px;top:929px;width:698px;height:26px;background:#e7e8f8;"></div>
<div class="a" style="left:932px;top:929px;width:185px;height:26px;background:#e7e8f8;"></div>
<div class="a" style="left:550px;top:933px;font:22px/22px 'Liberation Sans', sans-serif;color:#2c2c2c;white-space:pre;">140</div>
<div class="a" style="left:625px;top:933px;font:22px/22px 'Liberation Sans', sans-serif;color:#1a1a3a;white-space:pre;">Architecture Specific Data</div>
<div class="a" style="left:938px;top:933px;font:22px/22px 'Liberation Sans', sans-serif;color:#2c2c2c;white-space:pre;">0</div>
<div class="a" style="left:1125px;top:933px;font:22px/22px 'Liberation Sans', sans-serif;color:#2c2c2c;white-space:pre;">0</div>
<div class="a" style="left:619px;top:963px;width:311px;height:26px;background:#8fa4e5;"></div>
<div class="a" style="left:932px;top:963px;width:698px;height:26px;background:#e7e8f8;"></div>
<div class="a" style="left:932px;top:963px;width:185px;height:26px;background:#e7e8f8;"></div>
<div class="a" style="left:550px;top:967px;font:22px/22px 'Liberation Sans', sans-serif;color:#2c2c2c;white-space:pre;">148</div>
<div class="a" style="left:625px;top:967px;font:22px/22px 'Liberation Sans', sans-serif;color:#1a1a3a;white-space:pre;">RVA of GlobalPtr</div>
<div class="a" style="left:938px;top:967px;font:22px/22px 'Liberation Sans', sans-serif;color:#2c2c2c;white-space:pre;">0</div>
<div class="a" style="left:1125px;top:967px;font:22px/22px 'Liberation Sans', sans-serif;color:#2c2c2c;white-space:pre;">0</div>
<div class="a" style="left:619px;top:996px;width:311px;height:26px;background:#8fa4e5;"></div>
<div class="a" style="left:932px;top:996px;width:698px;height:26px;background:#e7e8f8;"></div>
<div class="a" style="left:932px;top:996px;width:185px;height:26px;background:#e7e8f8;"></div>
<div class="a" style="left:550px;top:1000px;font:22px/22px 'Liberation Sans', sans-serif;color:#2c2c2c;white-space:pre;">150</div>
<div class="a" style="left:625px;top:1000px;font:22px/22px 'Liberation Sans', sans-serif;color:#1a1a3a;white-space:pre;">TLS Directory</div>
<div class="a" style="left:938px;top:1000px;font:22px/22px 'Liberation Sans', sans-serif;color:#2c2c2c;white-space:pre;">4100</div>
<div class="a" style="left:1125px;top:1000px;font:22px/22px 'Liberation Sans', sans-serif;color:#2c2c2c;white-space:pre;">28</div>
<div class="a" style="left:619px;top:1030px;width:311px;height:26px;background:#8fa4e5;"></div>
<div class="a" style="left:932px;top:1030px;width:698px;height:26px;background:#e7e8f8;"></div>
<div class="a" style="left:932px;top:1030px;width:185px;height:26px;background:#e7e8f8;"></div>
<div class="a" style="left:550px;top:1034px;font:22px/22px 'Liberation Sans', sans-serif;color:#2c2c2c;white-space:pre;">158</div>
<div class="a" style="left:625px;top:1034px;font:22px/22px 'Liberation Sans', sans-serif;color:#1a1a3a;white-space:pre;">Load Configuration Directory</div>
<div class="a" style="left:938px;top:1034px;font:22px/22px 'Liberation Sans', sans-serif;color:#2c2c2c;white-space:pre;">0</div>
<div class="a" style="left:1125px;top:1034px;font:22px/22px 'Liberation Sans', sans-serif;color:#2c2c2c;white-space:pre;">0</div>
<div class="a" style="left:619px;top:1064px;width:311px;height:26px;background:#8fa4e5;"></div>
<div class="a" style="left:932px;top:1064px;width:698px;height:26px;background:#e7e8f8;"></div>
<div class="a" style="left:932px;top:1064px;width:185px;height:26px;background:#e7e8f8;"></div>
<div class="a" style="left:550px;top:1068px;font:22px/22px 'Liberation Sans', sans-serif;color:#2c2c2c;white-space:pre;">160</div>
<div class="a" style="left:625px;top:1068px;font:22px/22px 'Liberation Sans', sans-serif;color:#1a1a3a;white-space:pre;">Bound Import Directory</div>
<div class="a" style="left:938px;top:1068px;font:22px/22px 'Liberation Sans', sans-serif;color:#2c2c2c;white-space:pre;">0</div>
<div class="a" style="left:1125px;top:1068px;font:22px/22px 'Liberation Sans', sans-serif;color:#2c2c2c;white-space:pre;">0</div>
<div class="a" style="left:619px;top:1097px;width:311px;height:26px;background:#8fa4e5;"></div>
<div class="a" style="left:932px;top:1097px;width:698px;height:26px;background:#e7e8f8;"></div>
<div class="a" style="left:932px;top:1097px;width:185px;height:26px;background:#e7e8f8;"></div>
<div class="a" style="left:550px;top:1101px;font:22px/22px 'Liberation Sans', sans-serif;color:#2c2c2c;white-space:pre;">168</div>
<div class="a" style="left:625px;top:1101px;font:22px/22px 'Liberation Sans', sans-serif;color:#1a1a3a;white-space:pre;">Import Address Table</div>
<div class="a" style="left:938px;top:1101px;font:22px/22px 'Liberation Sans', sans-serif;color:#2c2c2c;white-space:pre;">8268</div>
<div class="a" style="left:1125px;top:1101px;font:22px/22px 'Liberation Sans', sans-serif;color:#2c2c2c;white-space:pre;">1A0</div>
<div class="a" style="left:619px;top:1131px;width:311px;height:26px;background:#8fa4e5;"></div>
<div class="a" style="left:932px;top:1131px;width:698px;height:26px;background:#e7e8f8;"></div>
<div class="a" style="left:932px;top:1131px;width:185px;height:26px;background:#e7e8f8;"></div>
<div class="a" style="left:550px;top:1135px;font:22px/22px 'Liberation Sans', sans-serif;color:#2c2c2c;white-space:pre;">170</div>
<div class="a" style="left:625px;top:1135px;font:22px/22px 'Liberation Sans', sans-serif;color:#1a1a3a;white-space:pre;">Delay Load Import Descriptors</div>
<div class="a" style="left:938px;top:1135px;font:22px/22px 'Liberation Sans', sans-serif;color:#2c2c2c;white-space:pre;">0</div>
<div class="a" style="left:1125px;top:1135px;font:22px/22px 'Liberation Sans', sans-serif;color:#2c2c2c;white-space:pre;">0</div>
<div class="a" style="left:619px;top:1165px;width:311px;height:26px;background:#8fa4e5;"></div>
<div class="a" style="left:932px;top:1165px;width:698px;height:26px;background:#e7e8f8;"></div>
<div class="a" style="left:932px;top:1165px;width:185px;height:26px;background:#e7e8f8;"></div>
<div class="a" style="left:550px;top:1169px;font:22px/22px 'Liberation Sans', sans-serif;color:#2c2c2c;white-space:pre;">178</div>
<div class="a" style="left:625px;top:1169px;font:22px/22px 'Liberation Sans', sans-serif;color:#1a1a3a;white-space:pre;">.NET header</div>
<div class="a" style="left:938px;top:1169px;font:22px/22px 'Liberation Sans', sans-serif;color:#2c2c2c;white-space:pre;">0</div>
<div class="a" style="left:1125px;top:1169px;font:22px/22px 'Liberation Sans', sans-serif;color:#2c2c2c;white-space:pre;">0</div>
<div class="a" style="left:1640px;top:930px;width:2px;height:250px;background:#9a9a9a;opacity:.6"></div>
<div class="a" style="left:492px;top:1211px;width:886px;height:2px;background:#7a7a7a;opacity:.8"></div>
<div class="a" style="left:1743px;top:1238px;width:1px;height:30px;background:#dadada;"></div>
<div class="a" style="left:1561px;top:1244px;font:22px/22px 'Liberation Sans';color:#3574c4;text-decoration:underline;white-space:pre">Check for updates</div>
<svg style="left:1752px;top:1250px" width="18" height="18"><rect x="14" y="2" width="2" height="2" fill="#b0b0b0"/><rect x="10" y="6" width="2" height="2" fill="#b0b0b0"/><rect x="14" y="6" width="2" height="2" fill="#b0b0b0"/><rect x="6" y="10" width="2" height="2" fill="#b0b0b0"/><rect x="10" y="10" width="2" height="2" fill="#b0b0b0"/><rect x="14" y="10" width="2" height="2" fill="#b0b0b0"/><rect x="2" y="14" width="2" height="2" fill="#b0b0b0"/><rect x="6" y="14" width="2" height="2" fill="#b0b0b0"/><rect x="10" y="14" width="2" height="2" fill="#b0b0b0"/><rect x="14" y="14" width="2" height="2" fill="#b0b0b0"/></svg>
<div class="a" style="left:1109px;top:450px;width:212px;height:67px;box-sizing:border-box;border:10px solid #e8402a"></div>
<div class="a" style="left:601px;top:1084px;width:430px;height:55px;box-sizing:border-box;border:10px solid #e8402a"></div>
<svg style="left:0;top:0" width="1772" height="1268">
<line x1="1472" y1="829" x2="1252" y2="577" stroke="#e8402a" stroke-width="10" stroke-linecap="butt"/>
<path d="M1220 541 L1272 562 L1234 595Z" fill="#e8402a"/>
<line x1="1400" y1="941" x2="1085" y2="1092" stroke="#e8402a" stroke-width="10"/>
<path d="M1048 1108 L1082 1065 L1104 1110Z" fill="#e8402a"/>
</svg>
</body></html>
